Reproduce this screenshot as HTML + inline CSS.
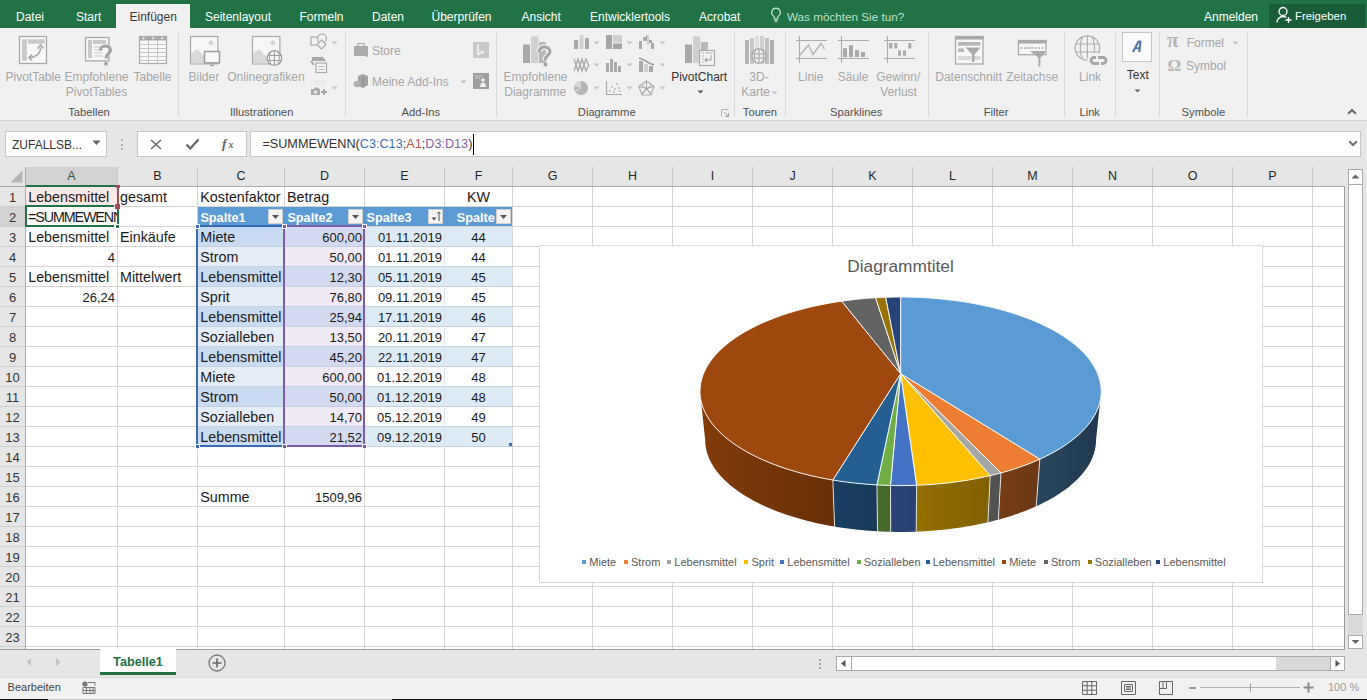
<!DOCTYPE html>
<html><head><meta charset="utf-8"><style>
html,body{margin:0;padding:0;width:1367px;height:700px;overflow:hidden;background:#fff;position:relative;font-family:"Liberation Sans",sans-serif;}
.t{position:absolute;white-space:pre;line-height:1;}
.r{position:absolute;}
</style></head><body>
<div class="r" style="left:0px;top:0px;width:1367px;height:28px;background:#217346;"></div>
<div class="r" style="left:116px;top:4px;width:74px;height:24px;background:#f1f1f1;"></div>
<div class="t" style="left:16px;top:10.64px;font-size:12px;color:#ffffff;font-weight:normal;">Datei</div>
<div class="t" style="left:76px;top:10.64px;font-size:12px;color:#ffffff;font-weight:normal;">Start</div>
<div class="t" style="left:205px;top:10.64px;font-size:12px;color:#ffffff;font-weight:normal;">Seitenlayout</div>
<div class="t" style="left:299.5px;top:10.64px;font-size:12px;color:#ffffff;font-weight:normal;">Formeln</div>
<div class="t" style="left:372px;top:10.64px;font-size:12px;color:#ffffff;font-weight:normal;">Daten</div>
<div class="t" style="left:431.5px;top:10.64px;font-size:12px;color:#ffffff;font-weight:normal;">Überprüfen</div>
<div class="t" style="left:521.5px;top:10.64px;font-size:12px;color:#ffffff;font-weight:normal;">Ansicht</div>
<div class="t" style="left:590px;top:10.64px;font-size:12px;color:#ffffff;font-weight:normal;">Entwicklertools</div>
<div class="t" style="left:699px;top:10.64px;font-size:12px;color:#ffffff;font-weight:normal;">Acrobat</div>
<div class="t" style="left:129.5px;top:10.64px;font-size:12px;color:#3a3a3a;font-weight:normal;">Einfügen</div>
<div class="t" style="left:787px;top:10.90px;font-size:11.7px;color:#bfe0ca;font-weight:normal;">Was möchten Sie tun?</div>
<svg class="r" style="left:770px;top:7px" width="12" height="16" viewBox="0 0 12 16"><path d="M6 1.2a4.3 4.3 0 0 0-2.6 7.7c.6.5.9 1.1.9 1.8v1.2h3.4v-1.2c0-.7.3-1.3.9-1.8A4.3 4.3 0 0 0 6 1.2z" fill="none" stroke="#c4e2cf" stroke-width="1.2"/><path d="M4.3 13.3h3.4M4.8 14.8h2.4" stroke="#c4e2cf" stroke-width="1.1"/></svg>
<div class="t" style="left:1204px;top:10.64px;font-size:12px;color:#ffffff;font-weight:normal;">Anmelden</div>
<div class="r" style="left:1269px;top:4px;width:96px;height:24px;background:#1a5c37;"></div>
<svg class="r" style="left:1276px;top:6px" width="17" height="18" viewBox="0 0 17 18"><circle cx="7" cy="5.5" r="4" fill="none" stroke="#fff" stroke-width="1.3"/><path d="M1 16.5c0-3.5 2.7-6 6-6 1.3 0 2.4.4 3.3 1" fill="none" stroke="#fff" stroke-width="1.3"/><path d="M12.5 11v6M9.5 14h6" stroke="#fff" stroke-width="1.3"/></svg>
<div class="t" style="left:1295px;top:11.15px;font-size:11.4px;color:#ffffff;font-weight:normal;">Freigeben</div>
<div class="r" style="left:0px;top:28px;width:1367px;height:92px;background:#f1f1f1;"></div>
<div class="r" style="left:0px;top:120px;width:1367px;height:1px;background:#d4d4d4;"></div>
<div class="r" style="left:178px;top:33px;width:1px;height:84px;background:#dadada;"></div>
<div class="r" style="left:345px;top:33px;width:1px;height:84px;background:#dadada;"></div>
<div class="r" style="left:496px;top:33px;width:1px;height:84px;background:#dadada;"></div>
<div class="r" style="left:734px;top:33px;width:1px;height:84px;background:#dadada;"></div>
<div class="r" style="left:785px;top:33px;width:1px;height:84px;background:#dadada;"></div>
<div class="r" style="left:928px;top:33px;width:1px;height:84px;background:#dadada;"></div>
<div class="r" style="left:1064px;top:33px;width:1px;height:84px;background:#dadada;"></div>
<div class="r" style="left:1115px;top:33px;width:1px;height:84px;background:#dadada;"></div>
<div class="r" style="left:1159px;top:33px;width:1px;height:84px;background:#dadada;"></div>
<div class="r" style="left:1247px;top:33px;width:1px;height:84px;background:#dadada;"></div>
<div class="t" style="left:-266.8px;width:600px;text-align:center;top:70.84px;font-size:12px;color:#a6a6a6;font-weight:normal;">PivotTable</div>
<div class="t" style="left:-203.5px;width:600px;text-align:center;top:70.84px;font-size:12px;color:#a6a6a6;font-weight:normal;">Empfohlene</div>
<div class="t" style="left:-203.5px;width:600px;text-align:center;top:86.34px;font-size:12px;color:#a6a6a6;font-weight:normal;">PivotTables</div>
<div class="t" style="left:-147.5px;width:600px;text-align:center;top:70.84px;font-size:12px;color:#a6a6a6;font-weight:normal;">Tabelle</div>
<div class="t" style="left:-211.0px;width:600px;text-align:center;top:106.82px;font-size:11.2px;color:#505050;font-weight:normal;">Tabellen</div>
<div class="t" style="left:-96.19999999999999px;width:600px;text-align:center;top:70.84px;font-size:12px;color:#a6a6a6;font-weight:normal;">Bilder</div>
<div class="t" style="left:-34.05000000000001px;width:600px;text-align:center;top:70.84px;font-size:12px;color:#a6a6a6;font-weight:normal;">Onlinegrafiken</div>
<div class="t" style="left:-38.35000000000002px;width:600px;text-align:center;top:106.82px;font-size:11.2px;color:#505050;font-weight:normal;">Illustrationen</div>
<div class="t" style="left:372px;top:44.84px;font-size:12px;color:#a6a6a6;font-weight:normal;">Store</div>
<div class="t" style="left:372px;top:75.84px;font-size:12px;color:#a6a6a6;font-weight:normal;">Meine Add-Ins</div>
<div class="t" style="left:120.89999999999998px;width:600px;text-align:center;top:106.82px;font-size:11.2px;color:#505050;font-weight:normal;">Add-Ins</div>
<div class="t" style="left:235.5px;width:600px;text-align:center;top:70.84px;font-size:12px;color:#a6a6a6;font-weight:normal;">Empfohlene</div>
<div class="t" style="left:235.25px;width:600px;text-align:center;top:86.34px;font-size:12px;color:#a6a6a6;font-weight:normal;">Diagramme</div>
<div class="t" style="left:399.20000000000005px;width:600px;text-align:center;top:70.84px;font-size:12px;color:#333333;font-weight:normal;">PivotChart</div>
<div class="t" style="left:306.75px;width:600px;text-align:center;top:106.82px;font-size:11.2px;color:#505050;font-weight:normal;">Diagramme</div>
<div class="t" style="left:458.9px;width:600px;text-align:center;top:70.84px;font-size:12px;color:#a6a6a6;font-weight:normal;">3D-</div>
<div class="t" style="left:455.5999999999999px;width:600px;text-align:center;top:86.34px;font-size:12px;color:#a6a6a6;font-weight:normal;">Karte</div>
<div class="t" style="left:459.95000000000005px;width:600px;text-align:center;top:106.82px;font-size:11.2px;color:#505050;font-weight:normal;">Touren</div>
<div class="t" style="left:510.75px;width:600px;text-align:center;top:70.84px;font-size:12px;color:#a6a6a6;font-weight:normal;">Linie</div>
<div class="t" style="left:553.0999999999999px;width:600px;text-align:center;top:70.84px;font-size:12px;color:#a6a6a6;font-weight:normal;">Säule</div>
<div class="t" style="left:598.25px;width:600px;text-align:center;top:70.84px;font-size:12px;color:#a6a6a6;font-weight:normal;">Gewinn/</div>
<div class="t" style="left:598.5999999999999px;width:600px;text-align:center;top:86.34px;font-size:12px;color:#a6a6a6;font-weight:normal;">Verlust</div>
<div class="t" style="left:556.2px;width:600px;text-align:center;top:106.82px;font-size:11.2px;color:#505050;font-weight:normal;">Sparklines</div>
<div class="t" style="left:668.65px;width:600px;text-align:center;top:70.84px;font-size:12px;color:#a6a6a6;font-weight:normal;">Datenschnitt</div>
<div class="t" style="left:732.1500000000001px;width:600px;text-align:center;top:70.84px;font-size:12px;color:#a6a6a6;font-weight:normal;">Zeitachse</div>
<div class="t" style="left:696.1px;width:600px;text-align:center;top:106.82px;font-size:11.2px;color:#505050;font-weight:normal;">Filter</div>
<div class="t" style="left:790.0999999999999px;width:600px;text-align:center;top:70.84px;font-size:12px;color:#a6a6a6;font-weight:normal;">Link</div>
<div class="t" style="left:789.6999999999998px;width:600px;text-align:center;top:106.82px;font-size:11.2px;color:#505050;font-weight:normal;">Link</div>
<div class="t" style="left:837.75px;width:600px;text-align:center;top:68.84px;font-size:12px;color:#333333;font-weight:normal;">Text</div>
<div class="t" style="left:1186.7px;top:36.84px;font-size:12px;color:#a6a6a6;font-weight:normal;">Formel</div>
<div class="t" style="left:1186px;top:60.34px;font-size:12px;color:#a6a6a6;font-weight:normal;">Symbol</div>
<div class="t" style="left:903.3499999999999px;width:600px;text-align:center;top:106.82px;font-size:11.2px;color:#505050;font-weight:normal;">Symbole</div>
<div class="r" style="left:0px;top:121px;width:1367px;height:46px;background:#e6e6e6;"></div>
<div class="r" style="left:5px;top:131px;width:102px;height:26px;background:#ffffff;box-sizing:border-box;border:1px solid #c6c6c6;"></div>
<div class="t" style="left:12px;top:138.84px;font-size:12px;color:#333333;font-weight:normal;">ZUFALLSB...</div>
<div class="r" style="left:137px;top:131px;width:110px;height:26px;background:#ffffff;box-sizing:border-box;border:1px solid #c6c6c6;"></div>
<div class="r" style="left:250px;top:131px;width:1111px;height:26px;background:#ffffff;box-sizing:border-box;border:1px solid #c6c6c6;"></div>
<div class="t" style="left:262.4px;top:138.28px;font-size:12.66px;color:#333333;font-weight:normal;">=SUMMEWENN(<span style="color:#3b70b8">C3:C13</span>;<span style="color:#c0504d">A1</span>;<span style="color:#8064a2">D3:D13</span>)</div>
<div class="r" style="left:473px;top:134px;width:1px;height:21px;background:#000000;"></div>
<div class="r" style="left:0px;top:167px;width:1345px;height:20px;background:#e6e6e6;"></div>
<div class="r" style="left:26px;top:167px;width:91px;height:19px;background:#d2d2d2;"></div>
<div class="r" style="left:117px;top:167px;width:1px;height:19px;background:#c6c6c6;"></div>
<div class="r" style="left:197px;top:167px;width:1px;height:19px;background:#c6c6c6;"></div>
<div class="r" style="left:284px;top:167px;width:1px;height:19px;background:#c6c6c6;"></div>
<div class="r" style="left:364px;top:167px;width:1px;height:19px;background:#c6c6c6;"></div>
<div class="r" style="left:444px;top:167px;width:1px;height:19px;background:#c6c6c6;"></div>
<div class="r" style="left:512px;top:167px;width:1px;height:19px;background:#c6c6c6;"></div>
<div class="r" style="left:592px;top:167px;width:1px;height:19px;background:#c6c6c6;"></div>
<div class="r" style="left:672px;top:167px;width:1px;height:19px;background:#c6c6c6;"></div>
<div class="r" style="left:752px;top:167px;width:1px;height:19px;background:#c6c6c6;"></div>
<div class="r" style="left:832px;top:167px;width:1px;height:19px;background:#c6c6c6;"></div>
<div class="r" style="left:912px;top:167px;width:1px;height:19px;background:#c6c6c6;"></div>
<div class="r" style="left:992px;top:167px;width:1px;height:19px;background:#c6c6c6;"></div>
<div class="r" style="left:1072px;top:167px;width:1px;height:19px;background:#c6c6c6;"></div>
<div class="r" style="left:1152px;top:167px;width:1px;height:19px;background:#c6c6c6;"></div>
<div class="r" style="left:1232px;top:167px;width:1px;height:19px;background:#c6c6c6;"></div>
<div class="r" style="left:1312px;top:167px;width:1px;height:19px;background:#c6c6c6;"></div>
<div class="t" style="left:-228.5px;width:600px;text-align:center;top:170.42px;font-size:12.5px;color:#2e5540;font-weight:normal;">A</div>
<div class="t" style="left:-142.5px;width:600px;text-align:center;top:170.42px;font-size:12.5px;color:#262626;font-weight:normal;">B</div>
<div class="t" style="left:-59.0px;width:600px;text-align:center;top:170.42px;font-size:12.5px;color:#262626;font-weight:normal;">C</div>
<div class="t" style="left:24.5px;width:600px;text-align:center;top:170.42px;font-size:12.5px;color:#262626;font-weight:normal;">D</div>
<div class="t" style="left:104.5px;width:600px;text-align:center;top:170.42px;font-size:12.5px;color:#262626;font-weight:normal;">E</div>
<div class="t" style="left:178.5px;width:600px;text-align:center;top:170.42px;font-size:12.5px;color:#262626;font-weight:normal;">F</div>
<div class="t" style="left:252.5px;width:600px;text-align:center;top:170.42px;font-size:12.5px;color:#262626;font-weight:normal;">G</div>
<div class="t" style="left:332.5px;width:600px;text-align:center;top:170.42px;font-size:12.5px;color:#262626;font-weight:normal;">H</div>
<div class="t" style="left:412.5px;width:600px;text-align:center;top:170.42px;font-size:12.5px;color:#262626;font-weight:normal;">I</div>
<div class="t" style="left:492.5px;width:600px;text-align:center;top:170.42px;font-size:12.5px;color:#262626;font-weight:normal;">J</div>
<div class="t" style="left:572.5px;width:600px;text-align:center;top:170.42px;font-size:12.5px;color:#262626;font-weight:normal;">K</div>
<div class="t" style="left:652.5px;width:600px;text-align:center;top:170.42px;font-size:12.5px;color:#262626;font-weight:normal;">L</div>
<div class="t" style="left:732.5px;width:600px;text-align:center;top:170.42px;font-size:12.5px;color:#262626;font-weight:normal;">M</div>
<div class="t" style="left:812.5px;width:600px;text-align:center;top:170.42px;font-size:12.5px;color:#262626;font-weight:normal;">N</div>
<div class="t" style="left:892.5px;width:600px;text-align:center;top:170.42px;font-size:12.5px;color:#262626;font-weight:normal;">O</div>
<div class="t" style="left:972.5px;width:600px;text-align:center;top:170.42px;font-size:12.5px;color:#262626;font-weight:normal;">P</div>
<div class="r" style="left:0px;top:186px;width:1345px;height:1px;background:#ababab;"></div>
<div class="r" style="left:26px;top:185px;width:91px;height:2px;background:#217346;"></div>
<div class="r" style="left:26px;top:187px;width:1318px;height:462px;background:#ffffff;"></div>
<div class="r" style="left:0px;top:187px;width:25px;height:462px;background:#e6e6e6;"></div>
<div class="r" style="left:0px;top:207px;width:25px;height:19px;background:#d2d2d2;"></div>
<div class="r" style="left:25px;top:167px;width:1px;height:482px;background:#ababab;"></div>
<div class="r" style="left:0px;top:206px;width:25px;height:1px;background:#d0d0d0;"></div>
<div class="r" style="left:26px;top:206px;width:1318px;height:1px;background:#d4d4d4;"></div>
<div class="r" style="left:0px;top:226px;width:25px;height:1px;background:#d0d0d0;"></div>
<div class="r" style="left:26px;top:226px;width:1318px;height:1px;background:#d4d4d4;"></div>
<div class="r" style="left:0px;top:246px;width:25px;height:1px;background:#d0d0d0;"></div>
<div class="r" style="left:26px;top:246px;width:1318px;height:1px;background:#d4d4d4;"></div>
<div class="r" style="left:0px;top:266px;width:25px;height:1px;background:#d0d0d0;"></div>
<div class="r" style="left:26px;top:266px;width:1318px;height:1px;background:#d4d4d4;"></div>
<div class="r" style="left:0px;top:286px;width:25px;height:1px;background:#d0d0d0;"></div>
<div class="r" style="left:26px;top:286px;width:1318px;height:1px;background:#d4d4d4;"></div>
<div class="r" style="left:0px;top:306px;width:25px;height:1px;background:#d0d0d0;"></div>
<div class="r" style="left:26px;top:306px;width:1318px;height:1px;background:#d4d4d4;"></div>
<div class="r" style="left:0px;top:326px;width:25px;height:1px;background:#d0d0d0;"></div>
<div class="r" style="left:26px;top:326px;width:1318px;height:1px;background:#d4d4d4;"></div>
<div class="r" style="left:0px;top:346px;width:25px;height:1px;background:#d0d0d0;"></div>
<div class="r" style="left:26px;top:346px;width:1318px;height:1px;background:#d4d4d4;"></div>
<div class="r" style="left:0px;top:366px;width:25px;height:1px;background:#d0d0d0;"></div>
<div class="r" style="left:26px;top:366px;width:1318px;height:1px;background:#d4d4d4;"></div>
<div class="r" style="left:0px;top:386px;width:25px;height:1px;background:#d0d0d0;"></div>
<div class="r" style="left:26px;top:386px;width:1318px;height:1px;background:#d4d4d4;"></div>
<div class="r" style="left:0px;top:406px;width:25px;height:1px;background:#d0d0d0;"></div>
<div class="r" style="left:26px;top:406px;width:1318px;height:1px;background:#d4d4d4;"></div>
<div class="r" style="left:0px;top:426px;width:25px;height:1px;background:#d0d0d0;"></div>
<div class="r" style="left:26px;top:426px;width:1318px;height:1px;background:#d4d4d4;"></div>
<div class="r" style="left:0px;top:446px;width:25px;height:1px;background:#d0d0d0;"></div>
<div class="r" style="left:26px;top:446px;width:1318px;height:1px;background:#d4d4d4;"></div>
<div class="r" style="left:0px;top:466px;width:25px;height:1px;background:#d0d0d0;"></div>
<div class="r" style="left:26px;top:466px;width:1318px;height:1px;background:#d4d4d4;"></div>
<div class="r" style="left:0px;top:486px;width:25px;height:1px;background:#d0d0d0;"></div>
<div class="r" style="left:26px;top:486px;width:1318px;height:1px;background:#d4d4d4;"></div>
<div class="r" style="left:0px;top:506px;width:25px;height:1px;background:#d0d0d0;"></div>
<div class="r" style="left:26px;top:506px;width:1318px;height:1px;background:#d4d4d4;"></div>
<div class="r" style="left:0px;top:526px;width:25px;height:1px;background:#d0d0d0;"></div>
<div class="r" style="left:26px;top:526px;width:1318px;height:1px;background:#d4d4d4;"></div>
<div class="r" style="left:0px;top:546px;width:25px;height:1px;background:#d0d0d0;"></div>
<div class="r" style="left:26px;top:546px;width:1318px;height:1px;background:#d4d4d4;"></div>
<div class="r" style="left:0px;top:566px;width:25px;height:1px;background:#d0d0d0;"></div>
<div class="r" style="left:26px;top:566px;width:1318px;height:1px;background:#d4d4d4;"></div>
<div class="r" style="left:0px;top:586px;width:25px;height:1px;background:#d0d0d0;"></div>
<div class="r" style="left:26px;top:586px;width:1318px;height:1px;background:#d4d4d4;"></div>
<div class="r" style="left:0px;top:606px;width:25px;height:1px;background:#d0d0d0;"></div>
<div class="r" style="left:26px;top:606px;width:1318px;height:1px;background:#d4d4d4;"></div>
<div class="r" style="left:0px;top:626px;width:25px;height:1px;background:#d0d0d0;"></div>
<div class="r" style="left:26px;top:626px;width:1318px;height:1px;background:#d4d4d4;"></div>
<div class="r" style="left:0px;top:646px;width:25px;height:1px;background:#d0d0d0;"></div>
<div class="r" style="left:26px;top:646px;width:1318px;height:1px;background:#d4d4d4;"></div>
<div class="r" style="left:117px;top:187px;width:1px;height:462px;background:#d4d4d4;"></div>
<div class="r" style="left:197px;top:187px;width:1px;height:462px;background:#d4d4d4;"></div>
<div class="r" style="left:284px;top:187px;width:1px;height:462px;background:#d4d4d4;"></div>
<div class="r" style="left:364px;top:187px;width:1px;height:462px;background:#d4d4d4;"></div>
<div class="r" style="left:444px;top:187px;width:1px;height:462px;background:#d4d4d4;"></div>
<div class="r" style="left:512px;top:187px;width:1px;height:462px;background:#d4d4d4;"></div>
<div class="r" style="left:592px;top:187px;width:1px;height:462px;background:#d4d4d4;"></div>
<div class="r" style="left:672px;top:187px;width:1px;height:462px;background:#d4d4d4;"></div>
<div class="r" style="left:752px;top:187px;width:1px;height:462px;background:#d4d4d4;"></div>
<div class="r" style="left:832px;top:187px;width:1px;height:462px;background:#d4d4d4;"></div>
<div class="r" style="left:912px;top:187px;width:1px;height:462px;background:#d4d4d4;"></div>
<div class="r" style="left:992px;top:187px;width:1px;height:462px;background:#d4d4d4;"></div>
<div class="r" style="left:1072px;top:187px;width:1px;height:462px;background:#d4d4d4;"></div>
<div class="r" style="left:1152px;top:187px;width:1px;height:462px;background:#d4d4d4;"></div>
<div class="r" style="left:1232px;top:187px;width:1px;height:462px;background:#d4d4d4;"></div>
<div class="r" style="left:1312px;top:187px;width:1px;height:462px;background:#d4d4d4;"></div>
<div class="r" style="left:1344px;top:187px;width:1px;height:462px;background:#9a9a9a;"></div>
<div class="t" style="left:-287.5px;width:600px;text-align:center;top:190.80px;font-size:13px;color:#333333;font-weight:normal;">1</div>
<div class="t" style="left:-287.5px;width:600px;text-align:center;top:210.80px;font-size:13px;color:#333333;font-weight:normal;">2</div>
<div class="t" style="left:-287.5px;width:600px;text-align:center;top:230.80px;font-size:13px;color:#333333;font-weight:normal;">3</div>
<div class="t" style="left:-287.5px;width:600px;text-align:center;top:250.80px;font-size:13px;color:#333333;font-weight:normal;">4</div>
<div class="t" style="left:-287.5px;width:600px;text-align:center;top:270.80px;font-size:13px;color:#333333;font-weight:normal;">5</div>
<div class="t" style="left:-287.5px;width:600px;text-align:center;top:290.80px;font-size:13px;color:#333333;font-weight:normal;">6</div>
<div class="t" style="left:-287.5px;width:600px;text-align:center;top:310.80px;font-size:13px;color:#333333;font-weight:normal;">7</div>
<div class="t" style="left:-287.5px;width:600px;text-align:center;top:330.80px;font-size:13px;color:#333333;font-weight:normal;">8</div>
<div class="t" style="left:-287.5px;width:600px;text-align:center;top:350.80px;font-size:13px;color:#333333;font-weight:normal;">9</div>
<div class="t" style="left:-287.5px;width:600px;text-align:center;top:370.80px;font-size:13px;color:#333333;font-weight:normal;">10</div>
<div class="t" style="left:-287.5px;width:600px;text-align:center;top:390.80px;font-size:13px;color:#333333;font-weight:normal;">11</div>
<div class="t" style="left:-287.5px;width:600px;text-align:center;top:410.80px;font-size:13px;color:#333333;font-weight:normal;">12</div>
<div class="t" style="left:-287.5px;width:600px;text-align:center;top:430.80px;font-size:13px;color:#333333;font-weight:normal;">13</div>
<div class="t" style="left:-287.5px;width:600px;text-align:center;top:450.80px;font-size:13px;color:#333333;font-weight:normal;">14</div>
<div class="t" style="left:-287.5px;width:600px;text-align:center;top:470.80px;font-size:13px;color:#333333;font-weight:normal;">15</div>
<div class="t" style="left:-287.5px;width:600px;text-align:center;top:490.80px;font-size:13px;color:#333333;font-weight:normal;">16</div>
<div class="t" style="left:-287.5px;width:600px;text-align:center;top:510.80px;font-size:13px;color:#333333;font-weight:normal;">17</div>
<div class="t" style="left:-287.5px;width:600px;text-align:center;top:530.80px;font-size:13px;color:#333333;font-weight:normal;">18</div>
<div class="t" style="left:-287.5px;width:600px;text-align:center;top:550.80px;font-size:13px;color:#333333;font-weight:normal;">19</div>
<div class="t" style="left:-287.5px;width:600px;text-align:center;top:570.80px;font-size:13px;color:#333333;font-weight:normal;">20</div>
<div class="t" style="left:-287.5px;width:600px;text-align:center;top:590.80px;font-size:13px;color:#333333;font-weight:normal;">21</div>
<div class="t" style="left:-287.5px;width:600px;text-align:center;top:610.80px;font-size:13px;color:#333333;font-weight:normal;">22</div>
<div class="t" style="left:-287.5px;width:600px;text-align:center;top:630.80px;font-size:13px;color:#333333;font-weight:normal;">23</div>
<div class="r" style="left:26px;top:187px;width:91px;height:19px;background:#fbe9e9;"></div>
<div class="t" style="left:28.2px;top:190.30px;font-size:14.3px;color:#1a1a1a;font-weight:normal;">Lebensmittel</div>
<div class="t" style="left:120px;top:190.30px;font-size:14.3px;color:#1a1a1a;font-weight:normal;">gesamt</div>
<div class="t" style="left:200.3px;top:190.30px;font-size:14.3px;color:#1a1a1a;font-weight:normal;">Kostenfaktor</div>
<div class="t" style="left:287px;top:190.30px;font-size:14.3px;color:#1a1a1a;font-weight:normal;">Betrag</div>
<div class="t" style="left:178.5px;width:600px;text-align:center;top:190.30px;font-size:14.3px;color:#1a1a1a;font-weight:normal;">KW</div>
<div class="r" style="left:26px;top:207px;width:91px;height:19px;overflow:hidden">
<div class="t" style="left:2px;top:3.30px;font-size:14.3px;color:#1a1a1a;font-weight:normal;letter-spacing:-1.1px;">=SUMMEWENN(C3</div>
</div>
<div class="t" style="left:28.2px;top:230.30px;font-size:14.3px;color:#1a1a1a;font-weight:normal;">Lebensmittel</div>
<div class="t" style="left:120px;top:230.30px;font-size:14.3px;color:#1a1a1a;font-weight:normal;">Einkäufe</div>
<div class="t" style="right:1252px;top:251.40px;font-size:13px;color:#1a1a1a;font-weight:normal;">4</div>
<div class="t" style="left:28.2px;top:270.30px;font-size:14.3px;color:#1a1a1a;font-weight:normal;">Lebensmittel</div>
<div class="t" style="left:120px;top:270.30px;font-size:14.3px;color:#1a1a1a;font-weight:normal;">Mittelwert</div>
<div class="t" style="right:1252px;top:291.40px;font-size:13px;color:#1a1a1a;font-weight:normal;">26,24</div>
<div class="t" style="left:200.3px;top:490.30px;font-size:14.3px;color:#1a1a1a;font-weight:normal;">Summe</div>
<div class="t" style="right:1005px;top:491.40px;font-size:13px;color:#1a1a1a;font-weight:normal;">1509,96</div>
<div class="r" style="left:198px;top:207px;width:314px;height:19px;background:#5b9bd5;"></div>
<div class="t" style="left:200.4px;top:211.65px;font-size:12.7px;color:#ffffff;font-weight:bold;">Spalte1</div>
<div class="t" style="left:287.4px;top:211.65px;font-size:12.7px;color:#ffffff;font-weight:bold;">Spalte2</div>
<div class="t" style="left:366.5px;top:211.65px;font-size:12.7px;color:#ffffff;font-weight:bold;">Spalte3</div>
<div class="r" style="left:445px;top:207px;width:50px;height:19px;overflow:hidden">
<div class="t" style="left:11.8px;top:4.65px;font-size:12.7px;color:#ffffff;font-weight:bold;">Spalte4</div>
</div>
<div class="r" style="left:268px;top:209px;width:15px;height:15px;background:#f4f4f4;box-sizing:border-box;border:1px solid #d0d0d0;"></div>
<svg class="r" style="left:268px;top:209px" width="15" height="15"><path d="M4 6h7l-3.5 4z" fill="#555"/></svg>
<div class="r" style="left:348px;top:209px;width:15px;height:15px;background:#f4f4f4;box-sizing:border-box;border:1px solid #d0d0d0;"></div>
<svg class="r" style="left:348px;top:209px" width="15" height="15"><path d="M4 6h7l-3.5 4z" fill="#555"/></svg>
<div class="r" style="left:428px;top:209px;width:15px;height:15px;background:#f4f4f4;box-sizing:border-box;border:1px solid #d0d0d0;"></div>
<svg class="r" style="left:428px;top:209px" width="15" height="15"><path d="M3.5 8.5h5l-2.5 3z" fill="#555"/><path d="M11 3v9M9.5 4.5L11 3l1.5 1.5" fill="none" stroke="#555" stroke-width="1"/></svg>
<div class="r" style="left:496px;top:209px;width:15px;height:15px;background:#f4f4f4;box-sizing:border-box;border:1px solid #d0d0d0;"></div>
<svg class="r" style="left:496px;top:209px" width="15" height="15"><path d="M4 6h7l-3.5 4z" fill="#555"/></svg>
<div class="r" style="left:198px;top:227px;width:86px;height:19px;background:#c9dbf2;"></div>
<div class="r" style="left:285px;top:227px;width:79px;height:19px;background:#d3d9f0;"></div>
<div class="r" style="left:365px;top:227px;width:79px;height:19px;background:#ddebf7;"></div>
<div class="r" style="left:445px;top:227px;width:67px;height:19px;background:#ddebf7;"></div>
<div class="r" style="left:198px;top:246px;width:314px;height:1px;background:#c5cfe0;"></div>
<div class="t" style="left:200.3px;top:230.30px;font-size:14.3px;color:#1a1a1a;font-weight:normal;">Miete</div>
<div class="t" style="right:1005px;top:231.40px;font-size:13px;color:#1a1a1a;font-weight:normal;">600,00</div>
<div class="t" style="right:925px;top:231.40px;font-size:13px;color:#1a1a1a;font-weight:normal;">01.11.2019</div>
<div class="t" style="left:178.5px;width:600px;text-align:center;top:231.40px;font-size:13px;color:#1a1a1a;font-weight:normal;">44</div>
<div class="r" style="left:198px;top:247px;width:86px;height:19px;background:#e5edf9;"></div>
<div class="r" style="left:285px;top:247px;width:79px;height:19px;background:#efeaf6;"></div>
<div class="r" style="left:365px;top:247px;width:79px;height:19px;background:#ffffff;"></div>
<div class="r" style="left:445px;top:247px;width:67px;height:19px;background:#ffffff;"></div>
<div class="r" style="left:198px;top:266px;width:314px;height:1px;background:#c5cfe0;"></div>
<div class="t" style="left:200.3px;top:250.30px;font-size:14.3px;color:#1a1a1a;font-weight:normal;">Strom</div>
<div class="t" style="right:1005px;top:251.40px;font-size:13px;color:#1a1a1a;font-weight:normal;">50,00</div>
<div class="t" style="right:925px;top:251.40px;font-size:13px;color:#1a1a1a;font-weight:normal;">01.11.2019</div>
<div class="t" style="left:178.5px;width:600px;text-align:center;top:251.40px;font-size:13px;color:#1a1a1a;font-weight:normal;">44</div>
<div class="r" style="left:198px;top:267px;width:86px;height:19px;background:#c9dbf2;"></div>
<div class="r" style="left:285px;top:267px;width:79px;height:19px;background:#d3d9f0;"></div>
<div class="r" style="left:365px;top:267px;width:79px;height:19px;background:#ddebf7;"></div>
<div class="r" style="left:445px;top:267px;width:67px;height:19px;background:#ddebf7;"></div>
<div class="r" style="left:198px;top:286px;width:314px;height:1px;background:#c5cfe0;"></div>
<div class="t" style="left:200.3px;top:270.30px;font-size:14.3px;color:#1a1a1a;font-weight:normal;">Lebensmittel</div>
<div class="t" style="right:1005px;top:271.40px;font-size:13px;color:#1a1a1a;font-weight:normal;">12,30</div>
<div class="t" style="right:925px;top:271.40px;font-size:13px;color:#1a1a1a;font-weight:normal;">05.11.2019</div>
<div class="t" style="left:178.5px;width:600px;text-align:center;top:271.40px;font-size:13px;color:#1a1a1a;font-weight:normal;">45</div>
<div class="r" style="left:198px;top:287px;width:86px;height:19px;background:#e5edf9;"></div>
<div class="r" style="left:285px;top:287px;width:79px;height:19px;background:#efeaf6;"></div>
<div class="r" style="left:365px;top:287px;width:79px;height:19px;background:#ffffff;"></div>
<div class="r" style="left:445px;top:287px;width:67px;height:19px;background:#ffffff;"></div>
<div class="r" style="left:198px;top:306px;width:314px;height:1px;background:#c5cfe0;"></div>
<div class="t" style="left:200.3px;top:290.30px;font-size:14.3px;color:#1a1a1a;font-weight:normal;">Sprit</div>
<div class="t" style="right:1005px;top:291.40px;font-size:13px;color:#1a1a1a;font-weight:normal;">76,80</div>
<div class="t" style="right:925px;top:291.40px;font-size:13px;color:#1a1a1a;font-weight:normal;">09.11.2019</div>
<div class="t" style="left:178.5px;width:600px;text-align:center;top:291.40px;font-size:13px;color:#1a1a1a;font-weight:normal;">45</div>
<div class="r" style="left:198px;top:307px;width:86px;height:19px;background:#c9dbf2;"></div>
<div class="r" style="left:285px;top:307px;width:79px;height:19px;background:#d3d9f0;"></div>
<div class="r" style="left:365px;top:307px;width:79px;height:19px;background:#ddebf7;"></div>
<div class="r" style="left:445px;top:307px;width:67px;height:19px;background:#ddebf7;"></div>
<div class="r" style="left:198px;top:326px;width:314px;height:1px;background:#c5cfe0;"></div>
<div class="t" style="left:200.3px;top:310.30px;font-size:14.3px;color:#1a1a1a;font-weight:normal;">Lebensmittel</div>
<div class="t" style="right:1005px;top:311.40px;font-size:13px;color:#1a1a1a;font-weight:normal;">25,94</div>
<div class="t" style="right:925px;top:311.40px;font-size:13px;color:#1a1a1a;font-weight:normal;">17.11.2019</div>
<div class="t" style="left:178.5px;width:600px;text-align:center;top:311.40px;font-size:13px;color:#1a1a1a;font-weight:normal;">46</div>
<div class="r" style="left:198px;top:327px;width:86px;height:19px;background:#e5edf9;"></div>
<div class="r" style="left:285px;top:327px;width:79px;height:19px;background:#efeaf6;"></div>
<div class="r" style="left:365px;top:327px;width:79px;height:19px;background:#ffffff;"></div>
<div class="r" style="left:445px;top:327px;width:67px;height:19px;background:#ffffff;"></div>
<div class="r" style="left:198px;top:346px;width:314px;height:1px;background:#c5cfe0;"></div>
<div class="t" style="left:200.3px;top:330.30px;font-size:14.3px;color:#1a1a1a;font-weight:normal;">Sozialleben</div>
<div class="t" style="right:1005px;top:331.40px;font-size:13px;color:#1a1a1a;font-weight:normal;">13,50</div>
<div class="t" style="right:925px;top:331.40px;font-size:13px;color:#1a1a1a;font-weight:normal;">20.11.2019</div>
<div class="t" style="left:178.5px;width:600px;text-align:center;top:331.40px;font-size:13px;color:#1a1a1a;font-weight:normal;">47</div>
<div class="r" style="left:198px;top:347px;width:86px;height:19px;background:#c9dbf2;"></div>
<div class="r" style="left:285px;top:347px;width:79px;height:19px;background:#d3d9f0;"></div>
<div class="r" style="left:365px;top:347px;width:79px;height:19px;background:#ddebf7;"></div>
<div class="r" style="left:445px;top:347px;width:67px;height:19px;background:#ddebf7;"></div>
<div class="r" style="left:198px;top:366px;width:314px;height:1px;background:#c5cfe0;"></div>
<div class="t" style="left:200.3px;top:350.30px;font-size:14.3px;color:#1a1a1a;font-weight:normal;">Lebensmittel</div>
<div class="t" style="right:1005px;top:351.40px;font-size:13px;color:#1a1a1a;font-weight:normal;">45,20</div>
<div class="t" style="right:925px;top:351.40px;font-size:13px;color:#1a1a1a;font-weight:normal;">22.11.2019</div>
<div class="t" style="left:178.5px;width:600px;text-align:center;top:351.40px;font-size:13px;color:#1a1a1a;font-weight:normal;">47</div>
<div class="r" style="left:198px;top:367px;width:86px;height:19px;background:#e5edf9;"></div>
<div class="r" style="left:285px;top:367px;width:79px;height:19px;background:#efeaf6;"></div>
<div class="r" style="left:365px;top:367px;width:79px;height:19px;background:#ffffff;"></div>
<div class="r" style="left:445px;top:367px;width:67px;height:19px;background:#ffffff;"></div>
<div class="r" style="left:198px;top:386px;width:314px;height:1px;background:#c5cfe0;"></div>
<div class="t" style="left:200.3px;top:370.30px;font-size:14.3px;color:#1a1a1a;font-weight:normal;">Miete</div>
<div class="t" style="right:1005px;top:371.40px;font-size:13px;color:#1a1a1a;font-weight:normal;">600,00</div>
<div class="t" style="right:925px;top:371.40px;font-size:13px;color:#1a1a1a;font-weight:normal;">01.12.2019</div>
<div class="t" style="left:178.5px;width:600px;text-align:center;top:371.40px;font-size:13px;color:#1a1a1a;font-weight:normal;">48</div>
<div class="r" style="left:198px;top:387px;width:86px;height:19px;background:#c9dbf2;"></div>
<div class="r" style="left:285px;top:387px;width:79px;height:19px;background:#d3d9f0;"></div>
<div class="r" style="left:365px;top:387px;width:79px;height:19px;background:#ddebf7;"></div>
<div class="r" style="left:445px;top:387px;width:67px;height:19px;background:#ddebf7;"></div>
<div class="r" style="left:198px;top:406px;width:314px;height:1px;background:#c5cfe0;"></div>
<div class="t" style="left:200.3px;top:390.30px;font-size:14.3px;color:#1a1a1a;font-weight:normal;">Strom</div>
<div class="t" style="right:1005px;top:391.40px;font-size:13px;color:#1a1a1a;font-weight:normal;">50,00</div>
<div class="t" style="right:925px;top:391.40px;font-size:13px;color:#1a1a1a;font-weight:normal;">01.12.2019</div>
<div class="t" style="left:178.5px;width:600px;text-align:center;top:391.40px;font-size:13px;color:#1a1a1a;font-weight:normal;">48</div>
<div class="r" style="left:198px;top:407px;width:86px;height:19px;background:#e5edf9;"></div>
<div class="r" style="left:285px;top:407px;width:79px;height:19px;background:#efeaf6;"></div>
<div class="r" style="left:365px;top:407px;width:79px;height:19px;background:#ffffff;"></div>
<div class="r" style="left:445px;top:407px;width:67px;height:19px;background:#ffffff;"></div>
<div class="r" style="left:198px;top:426px;width:314px;height:1px;background:#c5cfe0;"></div>
<div class="t" style="left:200.3px;top:410.30px;font-size:14.3px;color:#1a1a1a;font-weight:normal;">Sozialleben</div>
<div class="t" style="right:1005px;top:411.40px;font-size:13px;color:#1a1a1a;font-weight:normal;">14,70</div>
<div class="t" style="right:925px;top:411.40px;font-size:13px;color:#1a1a1a;font-weight:normal;">05.12.2019</div>
<div class="t" style="left:178.5px;width:600px;text-align:center;top:411.40px;font-size:13px;color:#1a1a1a;font-weight:normal;">49</div>
<div class="r" style="left:198px;top:427px;width:86px;height:19px;background:#c9dbf2;"></div>
<div class="r" style="left:285px;top:427px;width:79px;height:19px;background:#d3d9f0;"></div>
<div class="r" style="left:365px;top:427px;width:79px;height:19px;background:#ddebf7;"></div>
<div class="r" style="left:445px;top:427px;width:67px;height:19px;background:#ddebf7;"></div>
<div class="r" style="left:198px;top:446px;width:314px;height:1px;background:#c5cfe0;"></div>
<div class="t" style="left:200.3px;top:430.30px;font-size:14.3px;color:#1a1a1a;font-weight:normal;">Lebensmittel</div>
<div class="t" style="right:1005px;top:431.40px;font-size:13px;color:#1a1a1a;font-weight:normal;">21,52</div>
<div class="t" style="right:925px;top:431.40px;font-size:13px;color:#1a1a1a;font-weight:normal;">09.12.2019</div>
<div class="t" style="left:178.5px;width:600px;text-align:center;top:431.40px;font-size:13px;color:#1a1a1a;font-weight:normal;">50</div>
<div class="r" style="left:444px;top:227px;width:1px;height:220px;background:#d8e4f0;"></div>
<div class="r" style="left:196px;top:225px;width:2px;height:222px;background:#3a6cba;"></div>
<div class="r" style="left:196px;top:445px;width:88px;height:2px;background:#3a6cba;"></div>
<div class="r" style="left:283px;top:225px;width:2px;height:222px;background:#7a5ca8;"></div>
<div class="r" style="left:363px;top:225px;width:2px;height:222px;background:#7a5ca8;"></div>
<div class="r" style="left:283px;top:225px;width:82px;height:2px;background:#7a5ca8;"></div>
<div class="r" style="left:283px;top:445px;width:82px;height:2px;background:#7a5ca8;"></div>
<div class="r" style="left:196px;top:225px;width:88px;height:2px;background:#3a6cba;"></div>
<div class="r" style="left:195px;top:224px;width:5px;height:5px;background:#3a6cba;box-sizing:border-box;border:1px solid #fff;"></div>
<div class="r" style="left:195px;top:444px;width:5px;height:5px;background:#3a6cba;box-sizing:border-box;border:1px solid #fff;"></div>
<div class="r" style="left:282px;top:224px;width:5px;height:5px;background:#7a5ca8;box-sizing:border-box;border:1px solid #fff;"></div>
<div class="r" style="left:362px;top:224px;width:5px;height:5px;background:#7a5ca8;box-sizing:border-box;border:1px solid #fff;"></div>
<div class="r" style="left:282px;top:444px;width:5px;height:5px;background:#7a5ca8;box-sizing:border-box;border:1px solid #fff;"></div>
<div class="r" style="left:362px;top:444px;width:5px;height:5px;background:#7a5ca8;box-sizing:border-box;border:1px solid #fff;"></div>
<div class="r" style="left:509px;top:443px;width:3px;height:3px;background:#3a6cba;"></div>
<div class="r" style="left:117px;top:187px;width:2px;height:18px;background:#a84a5a;"></div>
<div class="r" style="left:116px;top:185px;width:4px;height:3px;background:#a84a5a;"></div>
<div class="r" style="left:115px;top:204px;width:5px;height:5px;background:#a84a5a;"></div>
<div class="r" style="left:26px;top:185px;width:90px;height:2px;background:#217346;"></div>
<div class="r" style="left:25px;top:205px;width:89px;height:2px;background:#217346;"></div>
<div class="r" style="left:25px;top:225px;width:89px;height:2px;background:#217346;"></div>
<div class="r" style="left:25px;top:205px;width:2px;height:22px;background:#217346;"></div>
<div class="r" style="left:117px;top:209px;width:2px;height:15px;background:#217346;"></div>
<div class="r" style="left:115px;top:224px;width:5px;height:5px;background:#217346;box-sizing:border-box;border:1px solid #fff;"></div>
<div class="r" style="left:0px;top:649px;width:1367px;height:28px;background:#e6e6e6;"></div>
<div class="r" style="left:0px;top:649px;width:1345px;height:1px;background:#9a9a9a;"></div>
<div class="r" style="left:100px;top:649px;width:76px;height:26px;background:#ffffff;"></div>
<div class="r" style="left:100px;top:672px;width:76px;height:3px;background:#217346;"></div>
<div class="t" style="left:-162px;width:600px;text-align:center;top:655.75px;font-size:12.7px;color:#217346;font-weight:bold;">Tabelle1</div>
<svg class="r" style="left:22px;top:655px" width="44" height="14"><path d="M9 3v8L4.5 7z" fill="#c2c2c2"/><path d="M34 3v8l4.5-4z" fill="#c2c2c2"/></svg>
<svg class="r" style="left:207px;top:653px" width="20" height="20"><circle cx="10" cy="10" r="8" fill="none" stroke="#777" stroke-width="1.3"/><path d="M10 5.5v9M5.5 10h9" stroke="#666" stroke-width="1.6"/></svg>
<div class="r" style="left:819px;top:659px;width:2px;height:2px;background:#aaaaaa;"></div>
<div class="r" style="left:819px;top:663px;width:2px;height:2px;background:#aaaaaa;"></div>
<div class="r" style="left:819px;top:667px;width:2px;height:2px;background:#aaaaaa;"></div>
<div class="r" style="left:836px;top:656px;width:509px;height:15px;background:#ffffff;box-sizing:border-box;border:1px solid #ababab;"></div>
<div class="r" style="left:1276px;top:657px;width:54px;height:13px;background:#d9d9d9;"></div>
<div class="r" style="left:851px;top:657px;width:1px;height:13px;background:#ababab;"></div>
<div class="r" style="left:1330px;top:657px;width:1px;height:13px;background:#ababab;"></div>
<svg class="r" style="left:836px;top:656px" width="15" height="15"><path d="M9.5 4v7L5 7.5z" fill="#555"/></svg>
<svg class="r" style="left:1330px;top:656px" width="15" height="15"><path d="M5.5 4v7L10 7.5z" fill="#555"/></svg>
<div class="r" style="left:1345px;top:167px;width:22px;height:482px;background:#e6e6e6;"></div>
<div class="r" style="left:1348px;top:169px;width:15px;height:480px;background:#d9d9d9;"></div>
<div class="r" style="left:1348px;top:169px;width:15px;height:446px;background:#ffffff;box-sizing:border-box;border:1px solid #ababab;"></div>
<div class="r" style="left:1348px;top:184px;width:15px;height:1px;background:#ababab;"></div>
<div class="r" style="left:1348px;top:635px;width:15px;height:14px;background:#ffffff;box-sizing:border-box;border:1px solid #ababab;"></div>
<svg class="r" style="left:1348px;top:169px" width="15" height="15"><path d="M3.5 9.5h8L7.5 5.5z" fill="#666"/></svg>
<svg class="r" style="left:1348px;top:635px" width="15" height="14"><path d="M3.5 5h8l-4 4z" fill="#666"/></svg>
<div class="r" style="left:0px;top:677px;width:1367px;height:22px;background:#f1f1f1;"></div>
<div class="r" style="left:0px;top:677px;width:1367px;height:1px;background:#dcdcdc;"></div>
<div class="r" style="left:0px;top:699px;width:48px;height:1px;background:#111111;"></div>
<div class="r" style="left:48px;top:699px;width:344px;height:1px;background:#c8c8c8;"></div>
<div class="r" style="left:392px;top:699px;width:975px;height:1px;background:#111111;"></div>
<div class="t" style="left:7.6px;top:682.39px;font-size:11px;color:#444444;font-weight:normal;">Bearbeiten</div>
<svg class="r" style="left:82px;top:681px" width="14" height="13"><circle cx="3" cy="3" r="2.6" fill="#777"/><path d="M6 1.5h7v3M1 6.5h12v6H1zM1 9.5h12M4.5 6.5v6M8 6.5v6M11 6.5v6" fill="none" stroke="#777" stroke-width="1"/></svg>
<svg class="r" style="left:1082px;top:681px" width="15" height="14"><path d="M.5 .5h14v13H.5zM5.2 .5v13M9.8 .5v13M.5 4.8h14M.5 9.2h14" fill="none" stroke="#666" stroke-width="1"/></svg>
<svg class="r" style="left:1121px;top:681px" width="15" height="14"><path d="M.5 .5h14v13H.5zM3.5 3.5h8v7h-8zM5 5.5h5M5 7h5M5 8.5h5" fill="none" stroke="#666" stroke-width="1"/></svg>
<svg class="r" style="left:1159px;top:681px" width="14" height="14"><path d="M.5 .5h13v13H.5zM.5 7.5h7v-7M4 .5v7" fill="none" stroke="#666" stroke-width="1"/></svg>
<div class="r" style="left:1189px;top:687px;width:7px;height:2px;background:#9a9a9a;"></div>
<div class="r" style="left:1200px;top:687px;width:100px;height:1px;background:#b0b0b0;"></div>
<div class="r" style="left:1250px;top:683px;width:1px;height:9px;background:#a0a0a0;"></div>
<svg class="r" style="left:1303px;top:682px" width="11" height="11"><path d="M5.5 .5v10M.5 5.5h10" stroke="#8a8a8a" stroke-width="2"/></svg>
<div class="t" style="left:1328px;top:682.09px;font-size:11px;color:#9a9a9a;font-weight:normal;">100 %</div>
<div class="r" style="left:539px;top:245px;width:724px;height:338px;background:#ffffff;box-sizing:border-box;border:1px solid #d9d9d9;"></div>
<div class="t" style="left:600.5px;width:600px;text-align:center;top:258.16px;font-size:17.3px;color:#595959;font-weight:normal;">Diagrammtitel</div>
<svg class="r" style="left:539px;top:245px" width="724" height="338" viewBox="539 245 724 338"><defs><linearGradient id="w0" gradientUnits="userSpaceOnUse" x1="1039.84" y1="0" x2="1101.22" y2="0"><stop offset="0.0000" stop-color="#28455f"/><stop offset="0.0461" stop-color="#28455f"/><stop offset="0.0913" stop-color="#28445e"/><stop offset="0.1354" stop-color="#28445d"/><stop offset="0.1785" stop-color="#27435c"/><stop offset="0.2205" stop-color="#27435c"/><stop offset="0.2614" stop-color="#27425b"/><stop offset="0.3013" stop-color="#26425a"/><stop offset="0.3402" stop-color="#26415a"/><stop offset="0.3779" stop-color="#264159"/><stop offset="0.4145" stop-color="#264058"/><stop offset="0.4501" stop-color="#254058"/><stop offset="0.4845" stop-color="#253f57"/><stop offset="0.5179" stop-color="#253f57"/><stop offset="0.5501" stop-color="#243f56"/><stop offset="0.5812" stop-color="#243e56"/><stop offset="0.6111" stop-color="#243e55"/><stop offset="0.6400" stop-color="#243d54"/><stop offset="0.6677" stop-color="#243d54"/><stop offset="0.6943" stop-color="#233d53"/><stop offset="0.7197" stop-color="#233c53"/><stop offset="0.7440" stop-color="#233c52"/><stop offset="0.7672" stop-color="#233b52"/><stop offset="0.7893" stop-color="#223b51"/><stop offset="0.8103" stop-color="#223b51"/><stop offset="0.8301" stop-color="#223a50"/><stop offset="0.8488" stop-color="#223a50"/><stop offset="0.8663" stop-color="#223a50"/><stop offset="0.8828" stop-color="#223a4f"/><stop offset="0.8982" stop-color="#21394f"/><stop offset="0.9124" stop-color="#21394e"/><stop offset="0.9256" stop-color="#21394e"/><stop offset="0.9376" stop-color="#21384e"/><stop offset="0.9486" stop-color="#21384d"/><stop offset="0.9585" stop-color="#21384d"/><stop offset="0.9673" stop-color="#21384d"/><stop offset="0.9750" stop-color="#20384d"/><stop offset="0.9817" stop-color="#20374c"/><stop offset="0.9873" stop-color="#20374c"/><stop offset="0.9919" stop-color="#20374c"/><stop offset="0.9955" stop-color="#20374c"/><stop offset="0.9980" stop-color="#20374b"/><stop offset="0.9995" stop-color="#20374b"/><stop offset="1.0000" stop-color="#20364b"/></linearGradient><linearGradient id="w1" gradientUnits="userSpaceOnUse" x1="1000.96" y1="0" x2="1039.84" y2="0"><stop offset="0.0000" stop-color="#753d18"/><stop offset="0.0910" stop-color="#743d18"/><stop offset="0.1806" stop-color="#733c17"/><stop offset="0.2690" stop-color="#723c17"/><stop offset="0.3560" stop-color="#713b17"/><stop offset="0.4417" stop-color="#703b17"/><stop offset="0.5259" stop-color="#6f3a17"/><stop offset="0.6087" stop-color="#6e3a16"/><stop offset="0.6900" stop-color="#6d3916"/><stop offset="0.7698" stop-color="#6d3916"/><stop offset="0.8481" stop-color="#6c3916"/><stop offset="0.9248" stop-color="#6b3816"/><stop offset="1.0000" stop-color="#6a3816"/></linearGradient><linearGradient id="w2" gradientUnits="userSpaceOnUse" x1="990.24" y1="0" x2="1000.96" y2="0"><stop offset="0.0000" stop-color="#535353"/><stop offset="0.3374" stop-color="#525252"/><stop offset="0.6708" stop-color="#525252"/><stop offset="1.0000" stop-color="#515151"/></linearGradient><linearGradient id="w3" gradientUnits="userSpaceOnUse" x1="916.59" y1="0" x2="990.24" y2="0"><stop offset="0.0000" stop-color="#947000"/><stop offset="0.0551" stop-color="#936f00"/><stop offset="0.1100" stop-color="#926e00"/><stop offset="0.1648" stop-color="#916d00"/><stop offset="0.2194" stop-color="#906c00"/><stop offset="0.2738" stop-color="#8f6c00"/><stop offset="0.3280" stop-color="#8e6b00"/><stop offset="0.3819" stop-color="#8d6a00"/><stop offset="0.4356" stop-color="#8c6900"/><stop offset="0.4889" stop-color="#8b6800"/><stop offset="0.5419" stop-color="#8a6800"/><stop offset="0.5945" stop-color="#896700"/><stop offset="0.6468" stop-color="#886600"/><stop offset="0.6986" stop-color="#876500"/><stop offset="0.7500" stop-color="#866400"/><stop offset="0.8010" stop-color="#856400"/><stop offset="0.8515" stop-color="#846300"/><stop offset="0.9015" stop-color="#836200"/><stop offset="0.9510" stop-color="#826100"/><stop offset="1.0000" stop-color="#816100"/></linearGradient><linearGradient id="w4" gradientUnits="userSpaceOnUse" x1="890.46" y1="0" x2="916.59" y2="0"><stop offset="0.0000" stop-color="#294577"/><stop offset="0.1428" stop-color="#294576"/><stop offset="0.2858" stop-color="#284476"/><stop offset="0.4288" stop-color="#284475"/><stop offset="0.5718" stop-color="#284374"/><stop offset="0.7147" stop-color="#284373"/><stop offset="0.8574" stop-color="#274273"/><stop offset="1.0000" stop-color="#274272"/></linearGradient><linearGradient id="w5" gradientUnits="userSpaceOnUse" x1="876.91" y1="0" x2="890.46" y2="0"><stop offset="0.0000" stop-color="#456c2c"/><stop offset="0.2493" stop-color="#456b2c"/><stop offset="0.4992" stop-color="#456a2b"/><stop offset="0.7494" stop-color="#446a2b"/><stop offset="1.0000" stop-color="#44692b"/></linearGradient><linearGradient id="w6" gradientUnits="userSpaceOnUse" x1="832.84" y1="0" x2="876.91" y2="0"><stop offset="0.0000" stop-color="#183f61"/><stop offset="0.0880" stop-color="#183e60"/><stop offset="0.1768" stop-color="#183e60"/><stop offset="0.2662" stop-color="#183d5f"/><stop offset="0.3562" stop-color="#183d5e"/><stop offset="0.4468" stop-color="#183d5e"/><stop offset="0.5379" stop-color="#173c5d"/><stop offset="0.6295" stop-color="#173c5d"/><stop offset="0.7216" stop-color="#173b5c"/><stop offset="0.8141" stop-color="#173b5b"/><stop offset="0.9069" stop-color="#173b5b"/><stop offset="1.0000" stop-color="#173a5a"/></linearGradient><linearGradient id="w7" gradientUnits="userSpaceOnUse" x1="699.98" y1="0" x2="832.84" y2="0"><stop offset="0.0000" stop-color="#853c0b"/><stop offset="0.0002" stop-color="#853c0b"/><stop offset="0.0010" stop-color="#853c0b"/><stop offset="0.0022" stop-color="#853c0b"/><stop offset="0.0038" stop-color="#843c0b"/><stop offset="0.0060" stop-color="#843c0b"/><stop offset="0.0087" stop-color="#843c0b"/><stop offset="0.0119" stop-color="#843c0b"/><stop offset="0.0156" stop-color="#843c0b"/><stop offset="0.0197" stop-color="#833c0b"/><stop offset="0.0244" stop-color="#833c0b"/><stop offset="0.0297" stop-color="#833b0b"/><stop offset="0.0354" stop-color="#833b0b"/><stop offset="0.0416" stop-color="#823b0b"/><stop offset="0.0484" stop-color="#823b0b"/><stop offset="0.0557" stop-color="#823b0b"/><stop offset="0.0636" stop-color="#823b0b"/><stop offset="0.0719" stop-color="#813b0b"/><stop offset="0.0808" stop-color="#813a0b"/><stop offset="0.0902" stop-color="#813a0b"/><stop offset="0.1002" stop-color="#803a0b"/><stop offset="0.1107" stop-color="#803a0b"/><stop offset="0.1217" stop-color="#803a0b"/><stop offset="0.1333" stop-color="#7f3a0b"/><stop offset="0.1454" stop-color="#7f390b"/><stop offset="0.1580" stop-color="#7e390b"/><stop offset="0.1712" stop-color="#7e390b"/><stop offset="0.1849" stop-color="#7e390b"/><stop offset="0.1992" stop-color="#7d390b"/><stop offset="0.2139" stop-color="#7d390b"/><stop offset="0.2293" stop-color="#7c380b"/><stop offset="0.2451" stop-color="#7c380b"/><stop offset="0.2615" stop-color="#7b380a"/><stop offset="0.2784" stop-color="#7b380a"/><stop offset="0.2958" stop-color="#7a380a"/><stop offset="0.3137" stop-color="#7a370a"/><stop offset="0.3322" stop-color="#79370a"/><stop offset="0.3511" stop-color="#79370a"/><stop offset="0.3706" stop-color="#78370a"/><stop offset="0.3905" stop-color="#78360a"/><stop offset="0.4110" stop-color="#77360a"/><stop offset="0.4319" stop-color="#77360a"/><stop offset="0.4534" stop-color="#76360a"/><stop offset="0.4753" stop-color="#76350a"/><stop offset="0.4976" stop-color="#75350a"/><stop offset="0.5205" stop-color="#75350a"/><stop offset="0.5438" stop-color="#74350a"/><stop offset="0.5675" stop-color="#73340a"/><stop offset="0.5917" stop-color="#73340a"/><stop offset="0.6163" stop-color="#72340a"/><stop offset="0.6413" stop-color="#72340a"/><stop offset="0.6667" stop-color="#71330a"/><stop offset="0.6926" stop-color="#70330a"/><stop offset="0.7188" stop-color="#703309"/><stop offset="0.7454" stop-color="#6f3209"/><stop offset="0.7724" stop-color="#6f3209"/><stop offset="0.7997" stop-color="#6e3209"/><stop offset="0.8274" stop-color="#6d3209"/><stop offset="0.8554" stop-color="#6d3109"/><stop offset="0.8837" stop-color="#6c3109"/><stop offset="0.9124" stop-color="#6b3109"/><stop offset="0.9413" stop-color="#6b3009"/><stop offset="0.9705" stop-color="#6a3009"/><stop offset="1.0000" stop-color="#693009"/></linearGradient></defs><path d="M1101.22,391.29 L1101.19,392.94 L1101.10,394.60 L1100.95,396.26 L1100.73,397.92 L1100.45,399.59 L1100.10,401.26 L1099.69,402.93 L1099.21,404.60 L1098.67,406.28 L1098.07,407.95 L1097.39,409.63 L1096.65,411.30 L1095.85,412.97 L1094.97,414.64 L1094.03,416.31 L1093.02,417.98 L1091.94,419.64 L1090.79,421.30 L1089.58,422.95 L1088.29,424.60 L1086.94,426.24 L1085.51,427.87 L1084.02,429.49 L1082.46,431.11 L1080.83,432.71 L1079.13,434.31 L1077.35,435.90 L1075.52,437.47 L1073.61,439.03 L1071.63,440.58 L1069.58,442.11 L1067.47,443.63 L1065.29,445.14 L1063.04,446.63 L1060.72,448.10 L1058.34,449.55 L1055.89,450.99 L1053.38,452.40 L1050.80,453.80 L1048.15,455.17 L1045.45,456.53 L1042.68,457.86 L1039.84,459.17 L1036.22,506.25 L1038.98,504.97 L1041.68,503.68 L1044.32,502.36 L1046.89,501.02 L1049.41,499.66 L1051.85,498.28 L1054.24,496.88 L1056.56,495.46 L1058.82,494.03 L1061.01,492.58 L1063.13,491.11 L1065.19,489.63 L1067.18,488.14 L1069.11,486.63 L1070.97,485.11 L1072.76,483.58 L1074.48,482.03 L1076.14,480.48 L1077.73,478.91 L1079.25,477.34 L1080.71,475.76 L1082.09,474.17 L1083.41,472.57 L1084.66,470.97 L1085.85,469.36 L1086.97,467.75 L1088.02,466.13 L1089.00,464.51 L1089.92,462.88 L1090.77,461.25 L1091.56,459.62 L1092.28,457.99 L1092.93,456.36 L1093.52,454.73 L1094.05,453.10 L1094.51,451.47 L1094.91,449.84 L1095.25,448.21 L1095.52,446.59 L1095.74,444.97 L1095.89,443.35 L1095.98,441.74 L1096.01,440.14Z" fill="url(#w0)"/><path d="M1039.84,459.17 L1036.92,460.47 L1033.94,461.74 L1030.89,462.99 L1027.79,464.21 L1024.63,465.40 L1021.41,466.57 L1018.13,467.70 L1014.80,468.81 L1011.42,469.89 L1007.98,470.93 L1004.49,471.95 L1000.96,472.93 L998.35,519.65 L1001.79,518.69 L1005.19,517.71 L1008.54,516.69 L1011.83,515.64 L1015.08,514.56 L1018.27,513.45 L1021.40,512.32 L1024.48,511.15 L1027.51,509.97 L1030.47,508.75 L1033.38,507.51 L1036.22,506.25Z" fill="url(#w1)"/><path d="M1000.96,472.93 L997.43,473.87 L993.86,474.77 L990.24,475.64 L987.91,522.29 L991.43,521.44 L994.91,520.56 L998.35,519.65Z" fill="url(#w2)"/><path d="M990.24,475.64 L986.63,476.47 L982.99,477.26 L979.31,478.02 L975.59,478.74 L971.83,479.43 L968.04,480.09 L964.23,480.71 L960.38,481.29 L956.50,481.84 L952.60,482.35 L948.67,482.83 L944.72,483.27 L940.75,483.67 L936.76,484.03 L932.75,484.36 L928.73,484.64 L924.70,484.89 L920.65,485.10 L916.59,485.28 L916.18,531.68 L920.13,531.51 L924.07,531.30 L928.00,531.06 L931.92,530.78 L935.82,530.46 L939.71,530.11 L943.57,529.72 L947.42,529.29 L951.25,528.83 L955.05,528.33 L958.82,527.80 L962.57,527.23 L966.29,526.62 L969.98,525.98 L973.64,525.31 L977.26,524.61 L980.85,523.87 L984.40,523.09 L987.91,522.29Z" fill="url(#w3)"/><path d="M916.59,485.28 L912.87,485.40 L909.14,485.49 L905.40,485.55 L901.67,485.57 L897.93,485.57 L894.19,485.53 L890.46,485.46 L890.72,531.85 L894.36,531.92 L898.00,531.96 L901.64,531.97 L905.28,531.94 L908.91,531.88 L912.55,531.80 L916.18,531.68Z" fill="url(#w4)"/><path d="M890.46,485.46 L887.07,485.36 L883.67,485.24 L880.29,485.09 L876.91,484.92 L877.52,531.32 L880.82,531.50 L884.11,531.64 L887.42,531.76 L890.72,531.85Z" fill="url(#w5)"/><path d="M876.91,484.92 L872.80,484.67 L868.71,484.38 L864.64,484.05 L860.58,483.68 L856.55,483.28 L852.53,482.83 L848.54,482.35 L844.57,481.82 L840.63,481.27 L836.72,480.67 L832.84,480.04 L834.60,526.57 L838.38,527.19 L842.19,527.77 L846.03,528.31 L849.89,528.82 L853.78,529.29 L857.69,529.73 L861.62,530.12 L865.58,530.48 L869.54,530.80 L873.53,531.08 L877.52,531.32Z" fill="url(#w6)"/><path d="M832.84,480.04 L828.92,479.35 L825.04,478.63 L821.20,477.88 L817.39,477.08 L813.63,476.26 L809.91,475.39 L806.23,474.49 L802.60,473.56 L799.02,472.60 L795.48,471.60 L792.00,470.57 L788.56,469.50 L785.18,468.41 L781.86,467.29 L778.59,466.14 L775.38,464.96 L772.22,463.75 L769.13,462.51 L766.10,461.25 L763.12,459.96 L760.21,458.65 L757.37,457.31 L754.58,455.95 L751.86,454.57 L749.21,453.16 L746.63,451.74 L744.11,450.29 L741.66,448.83 L739.27,447.34 L736.96,445.84 L734.72,444.32 L732.54,442.79 L730.44,441.24 L728.40,439.67 L726.44,438.09 L724.55,436.50 L722.72,434.90 L720.97,433.28 L719.29,431.66 L717.68,430.02 L716.15,428.38 L714.68,426.72 L713.29,425.06 L711.96,423.40 L710.71,421.72 L709.53,420.04 L708.42,418.36 L707.38,416.67 L706.41,414.98 L705.51,413.28 L704.68,411.59 L703.92,409.89 L703.22,408.19 L702.60,406.49 L702.04,404.79 L701.55,403.10 L701.13,401.40 L700.78,399.71 L700.49,398.02 L700.26,396.33 L700.10,394.65 L700.01,392.97 L699.98,391.29 L705.19,440.14 L705.22,441.77 L705.32,443.40 L705.47,445.04 L705.69,446.68 L705.97,448.33 L706.32,449.98 L706.73,451.63 L707.21,453.28 L707.75,454.94 L708.36,456.59 L709.03,458.25 L709.77,459.90 L710.58,461.55 L711.46,463.21 L712.40,464.85 L713.42,466.50 L714.50,468.14 L715.65,469.77 L716.87,471.40 L718.16,473.03 L719.52,474.65 L720.94,476.26 L722.44,477.86 L724.01,479.45 L725.64,481.03 L727.35,482.61 L729.12,484.17 L730.97,485.72 L732.88,487.26 L734.86,488.78 L736.91,490.29 L739.03,491.79 L741.22,493.26 L743.47,494.73 L745.79,496.17 L748.18,497.60 L750.63,499.01 L753.15,500.40 L755.73,501.76 L758.38,503.11 L761.09,504.44 L763.86,505.74 L766.70,507.02 L769.59,508.27 L772.55,509.50 L775.56,510.71 L778.63,511.88 L781.76,513.03 L784.95,514.16 L788.18,515.25 L791.48,516.31 L794.82,517.35 L798.21,518.35 L801.66,519.33 L805.15,520.27 L808.68,521.17 L812.27,522.05 L815.89,522.89 L819.56,523.70 L823.26,524.47 L827.01,525.21 L830.79,525.91 L834.60,526.57Z" fill="url(#w7)"/><path d="M1039.84,459.17 L1036.22,506.25" stroke="#ffffff" stroke-width="0.9" opacity="0.85"/><path d="M1000.96,472.93 L998.35,519.65" stroke="#ffffff" stroke-width="0.9" opacity="0.85"/><path d="M990.24,475.64 L987.91,522.29" stroke="#ffffff" stroke-width="0.9" opacity="0.85"/><path d="M916.59,485.28 L916.18,531.68" stroke="#ffffff" stroke-width="0.9" opacity="0.85"/><path d="M890.46,485.46 L890.72,531.85" stroke="#ffffff" stroke-width="0.9" opacity="0.85"/><path d="M876.91,484.92 L877.52,531.32" stroke="#ffffff" stroke-width="0.9" opacity="0.85"/><path d="M832.84,480.04 L834.60,526.57" stroke="#ffffff" stroke-width="0.9" opacity="0.85"/><path d="M900.60,373.70 L900.60,297.01 L906.36,297.05 L912.11,297.17 L917.86,297.36 L923.60,297.63 L929.32,297.98 L935.03,298.41 L940.71,298.91 L946.37,299.50 L951.99,300.16 L957.59,300.89 L963.14,301.71 L968.65,302.60 L974.12,303.57 L979.54,304.62 L984.91,305.74 L990.22,306.94 L995.46,308.22 L1000.64,309.57 L1005.75,311.00 L1010.79,312.50 L1015.74,314.08 L1020.61,315.74 L1025.39,317.47 L1030.08,319.27 L1034.67,321.15 L1039.15,323.10 L1043.52,325.13 L1047.78,327.22 L1051.93,329.39 L1055.94,331.63 L1059.83,333.94 L1063.58,336.31 L1067.19,338.75 L1070.65,341.26 L1073.96,343.84 L1077.10,346.47 L1080.09,349.17 L1082.90,351.93 L1085.54,354.75 L1087.99,357.62 L1090.26,360.55 L1092.33,363.53 L1094.20,366.56 L1095.86,369.64 L1097.31,372.76 L1098.54,375.92 L1099.55,379.12 L1100.32,382.36 L1100.86,385.63 L1101.16,388.93 L1101.21,392.25 L1101.01,395.60 L1100.56,398.96 L1099.84,402.33 L1098.86,405.71 L1097.62,409.09 L1096.10,412.47 L1094.30,415.85 L1092.23,419.21 L1089.87,422.56 L1087.24,425.88 L1084.32,429.17 L1081.12,432.43 L1077.64,435.64 L1073.88,438.81 L1069.83,441.93 L1065.51,444.99 L1060.91,447.98 L1056.04,450.90 L1050.90,453.74 L1045.50,456.50 L1039.84,459.17Z" fill="#5B9BD5" stroke="#ffffff" stroke-width="0.9" stroke-linejoin="round"/><path d="M900.60,373.70 L1039.84,459.17 L1033.94,461.74 L1027.79,464.21 L1021.41,466.57 L1014.80,468.81 L1007.98,470.93 L1000.96,472.93Z" fill="#ED7D31" stroke="#ffffff" stroke-width="0.9" stroke-linejoin="round"/><path d="M900.60,373.70 L1000.96,472.93 L995.65,474.32 L990.24,475.64Z" fill="#A5A5A5" stroke="#ffffff" stroke-width="0.9" stroke-linejoin="round"/><path d="M900.60,373.70 L990.24,475.64 L983.36,477.18 L976.33,478.60 L969.18,479.90 L961.92,481.06 L954.55,482.10 L947.09,483.01 L939.56,483.78 L931.95,484.42 L924.29,484.92 L916.59,485.28Z" fill="#FFC000" stroke="#ffffff" stroke-width="0.9" stroke-linejoin="round"/><path d="M900.60,373.70 L916.59,485.28 L910.07,485.47 L903.53,485.57 L897.00,485.56 L890.46,485.46Z" fill="#4472C4" stroke="#ffffff" stroke-width="0.9" stroke-linejoin="round"/><path d="M900.60,373.70 L890.46,485.46 L883.67,485.24 L876.91,484.92Z" fill="#70AD47" stroke="#ffffff" stroke-width="0.9" stroke-linejoin="round"/><path d="M900.60,373.70 L876.91,484.92 L869.40,484.43 L861.93,483.81 L854.54,483.06 L847.21,482.18 L839.98,481.17 L832.84,480.04Z" fill="#255E91" stroke="#ffffff" stroke-width="0.9" stroke-linejoin="round"/><path d="M900.60,373.70 L832.84,480.04 L825.08,478.64 L817.46,477.10 L810.00,475.42 L802.72,473.59 L795.63,471.64 L788.74,469.56 L782.06,467.36 L775.59,465.04 L769.36,462.61 L763.37,460.07 L757.63,457.44 L752.14,454.71 L746.91,451.90 L741.95,449.00 L737.25,446.03 L732.83,443.00 L728.69,439.90 L724.83,436.75 L721.25,433.55 L717.95,430.30 L714.94,427.02 L712.21,423.71 L709.76,420.37 L707.59,417.02 L705.70,413.64 L704.08,410.27 L702.74,406.88 L701.66,403.50 L700.86,400.12 L700.31,396.76 L700.03,393.41 L699.99,390.08 L700.21,386.77 L700.66,383.49 L701.36,380.24 L702.29,377.03 L703.44,373.85 L704.81,370.71 L706.40,367.62 L708.20,364.57 L710.20,361.58 L712.40,358.63 L714.79,355.74 L717.36,352.90 L720.12,350.12 L723.04,347.40 L726.14,344.74 L729.39,342.15 L732.80,339.62 L736.36,337.15 L740.06,334.75 L743.90,332.42 L747.87,330.16 L751.97,327.97 L756.19,325.85 L760.52,323.80 L764.97,321.82 L769.52,319.92 L774.18,318.09 L778.92,316.33 L783.76,314.65 L788.69,313.04 L793.70,311.51 L798.78,310.06 L803.94,308.68 L809.16,307.37 L814.45,306.15 L819.79,305.00 L825.19,303.92 L830.65,302.93 L836.14,302.01 L841.69,301.17Z" fill="#9E480E" stroke="#ffffff" stroke-width="0.9" stroke-linejoin="round"/><path d="M900.60,373.70 L841.69,301.17 L847.27,300.40 L852.88,299.72 L858.53,299.11 L864.20,298.57 L869.90,298.12 L875.62,297.74Z" fill="#636363" stroke="#ffffff" stroke-width="0.9" stroke-linejoin="round"/><path d="M900.60,373.70 L875.62,297.74 L880.67,297.48 L885.74,297.27Z" fill="#997300" stroke="#ffffff" stroke-width="0.9" stroke-linejoin="round"/><path d="M900.60,373.70 L885.74,297.27 L890.69,297.13 L895.64,297.04 L900.60,297.01Z" fill="#264478" stroke="#ffffff" stroke-width="0.9" stroke-linejoin="round"/></svg>
<div class="r" style="left:582px;top:560px;width:4px;height:4px;background:#5B9BD5;"></div>
<div class="t" style="left:589.3px;top:557.09px;font-size:11px;color:#595959;font-weight:normal;">Miete</div>
<div class="r" style="left:624px;top:560px;width:4px;height:4px;background:#ED7D31;"></div>
<div class="t" style="left:631px;top:557.09px;font-size:11px;color:#595959;font-weight:normal;">Strom</div>
<div class="r" style="left:667px;top:560px;width:4px;height:4px;background:#A5A5A5;"></div>
<div class="t" style="left:674.3px;top:557.09px;font-size:11px;color:#595959;font-weight:normal;">Lebensmittel</div>
<div class="r" style="left:744px;top:560px;width:4px;height:4px;background:#FFC000;"></div>
<div class="t" style="left:751.5px;top:557.09px;font-size:11px;color:#595959;font-weight:normal;">Sprit</div>
<div class="r" style="left:780px;top:560px;width:4px;height:4px;background:#4472C4;"></div>
<div class="t" style="left:787.3px;top:557.09px;font-size:11px;color:#595959;font-weight:normal;">Lebensmittel</div>
<div class="r" style="left:857px;top:560px;width:4px;height:4px;background:#70AD47;"></div>
<div class="t" style="left:863.7px;top:557.09px;font-size:11px;color:#595959;font-weight:normal;">Sozialleben</div>
<div class="r" style="left:926px;top:560px;width:4px;height:4px;background:#255E91;"></div>
<div class="t" style="left:932.7px;top:557.09px;font-size:11px;color:#595959;font-weight:normal;">Lebensmittel</div>
<div class="r" style="left:1002px;top:560px;width:4px;height:4px;background:#9E480E;"></div>
<div class="t" style="left:1009.2px;top:557.09px;font-size:11px;color:#595959;font-weight:normal;">Miete</div>
<div class="r" style="left:1044px;top:560px;width:4px;height:4px;background:#636363;"></div>
<div class="t" style="left:1051px;top:557.09px;font-size:11px;color:#595959;font-weight:normal;">Strom</div>
<div class="r" style="left:1088px;top:560px;width:4px;height:4px;background:#997300;"></div>
<div class="t" style="left:1094.8px;top:557.09px;font-size:11px;color:#595959;font-weight:normal;">Sozialleben</div>
<div class="r" style="left:1156px;top:560px;width:4px;height:4px;background:#264478;"></div>
<div class="t" style="left:1163.3px;top:557.09px;font-size:11px;color:#595959;font-weight:normal;">Lebensmittel</div>
<svg class="r" style="left:18px;top:35px" width="30" height="30" viewBox="0 0 30 30"><rect x="1.5" y="1.5" width="27" height="27" fill="#f7f7f7" stroke="#a9a9a9" stroke-width="1.3"/><rect x="10" y="4.3" width="16.6" height="4.4" fill="#c9c9c9"/><rect x="4" y="4.3" width="4.9" height="21.4" fill="#c9c9c9"/><path d="M11.5 22.5c6 0 11-3.5 11-10" fill="none" stroke="#a9a9a9" stroke-width="1.6"/><path d="M19.5 13.5l3-3.5 3 3.5M14 19.5l-3 3 3 3" fill="none" stroke="#a9a9a9" stroke-width="1.6"/></svg>
<svg class="r" style="left:84px;top:36px" width="30" height="31" viewBox="0 0 30 31"><rect x="1.5" y="1.5" width="23.4" height="23.4" fill="#f7f7f7" stroke="#a9a9a9" stroke-width="1.3"/><rect x="9" y="4" width="13" height="4" fill="#c9c9c9"/><rect x="4" y="4" width="4" height="18" fill="#c9c9c9"/><path d="M10 11h9M10 14h9M10 17h9M10 20h9" stroke="#c9c9c9" stroke-width="1"/><path d="M16.3 14.5c0-3 2.4-4.6 5.2-4.6 2.9 0 5 1.8 5 4.3 0 3.3-4.3 3.6-4.3 7v1.3" fill="none" stroke="#a3a3a3" stroke-width="3"/><rect x="20.3" y="26" width="3.4" height="3.4" fill="#a3a3a3"/></svg>
<svg class="r" style="left:138px;top:35px" width="30" height="30" viewBox="0 0 30 30"><rect x="1.5" y="1.5" width="27" height="27" fill="#f9f9f9" stroke="#a9a9a9" stroke-width="1.2"/><rect x="1" y="1" width="28" height="4.5" fill="#a9a9a9"/><path d="M10.5 5.5v23M19.5 5.5v23M1.5 9.5h27M1.5 13.5h27M1.5 17.5h27M1.5 21.5h27M1.5 25.5h27" stroke="#c4c4c4" stroke-width="1"/><path d="M4 2.5h3l-1.5 2zM13.5 2.5h3l-1.5 2zM22.5 2.5h3l-1.5 2z" fill="#fff"/></svg>
<svg class="r" style="left:189px;top:35px" width="33" height="33" viewBox="0 0 33 33"><rect x="1.5" y="1.5" width="27.4" height="27.4" fill="#f7f5f7" stroke="#a9a9a9" stroke-width="1.2"/><circle cx="22" cy="8" r="2.4" fill="#d6d6d6"/><path d="M2 28.5V19l6-5 8 8v6.5z" fill="#d8d8d8"/><rect x="15.5" y="16.5" width="15" height="11.4" fill="#f7f7f7" stroke="#9c9c9c" stroke-width="1.5"/><path d="M21 30.5h4" stroke="#9c9c9c" stroke-width="1.2"/></svg>
<svg class="r" style="left:251px;top:35px" width="35" height="33" viewBox="0 0 35 33"><rect x="1.5" y="1.5" width="27.4" height="27.4" fill="#f7f5f7" stroke="#a9a9a9" stroke-width="1.2"/><circle cx="22" cy="8" r="2.4" fill="#d6d6d6"/><path d="M2 28.5V19l6-5 8 8v6.5z" fill="#d8d8d8"/><circle cx="23.4" cy="23" r="7.3" fill="#f7f7f7" stroke="#9c9c9c" stroke-width="1.3"/><path d="M16.5 20.5h14M16.5 25.5h14M23.4 15.7v14.6M20 16.5c-2 4-2 9 0 13M26.8 16.5c2 4 2 9 0 13" fill="none" stroke="#9c9c9c" stroke-width="1"/></svg>
<svg class="r" style="left:310px;top:33px" width="19" height="17" viewBox="0 0 19 17"><rect x="1" y="4" width="9" height="8" fill="none" stroke="#a9a9a9" stroke-width="1.2"/><circle cx="12" cy="5.5" r="4.5" fill="#f1f1f1" stroke="#a9a9a9" stroke-width="1.2"/><path d="M11.5 7l4.5 4.5-4.5 4.5-4.5-4.5z" fill="#f1f1f1" stroke="#a9a9a9" stroke-width="1.2"/></svg>
<svg class="r" style="left:331px;top:41px" width="7" height="4" viewBox="0 0 7 4"><path d="M.5 .5h6L3.5 3.5z" fill="#c4c4c4"/></svg>
<svg class="r" style="left:310px;top:56px" width="18" height="18" viewBox="0 0 18 18"><path d="M2 1h11l3 4H2z" fill="#a9a9a9"/><path d="M1 5l3 4" stroke="#a9a9a9" stroke-width="2"/><rect x="6" y="7" width="10.5" height="9.5" fill="#f3f3f3" stroke="#a9a9a9" stroke-width="1.2"/><path d="M8.5 10.5h6M8.5 13.5h6" stroke="#bdbdbd" stroke-width="1"/></svg>
<svg class="r" style="left:310px;top:80px" width="18" height="17" viewBox="0 0 18 17"><path d="M1 1h16M1 4h16M4 1v6M8 1v6M12 1v6" stroke="#dedede" stroke-width="1" stroke-dasharray="1 1"/><path d="M1 9h3l1-1.5h3l1 1.5h1v6H1z" fill="#a9a9a9"/><circle cx="5.5" cy="12" r="1.8" fill="#e8e8e8"/><path d="M14 9v6M11 12h6" stroke="#a9a9a9" stroke-width="2"/></svg>
<svg class="r" style="left:331px;top:86px" width="7" height="4" viewBox="0 0 7 4"><path d="M.5 .5h6L3.5 3.5z" fill="#c4c4c4"/></svg>
<svg class="r" style="left:353px;top:41px" width="16" height="17" viewBox="0 0 16 17"><path d="M1 5h14v11l-3-1H1z" fill="#aaaaaa"/><path d="M5 5V2.5h6V5" fill="none" stroke="#aaaaaa" stroke-width="1.2"/></svg>
<svg class="r" style="left:353px;top:73px" width="16" height="16" viewBox="0 0 16 16"><path d="M5 3l5-2 5 2v9l-5 3-5-2z" fill="#a3a3a3"/><path d="M10 4v10" stroke="#8e8e8e" stroke-width="1"/><circle cx="4" cy="11" r="3.3" fill="#b2b2b2"/></svg>
<svg class="r" style="left:460px;top:80px" width="7" height="4" viewBox="0 0 7 4"><path d="M.5 .5h6L3.5 3.5z" fill="#c2c2c2"/></svg>
<svg class="r" style="left:472px;top:41px" width="18" height="18" viewBox="0 0 18 18"><rect x="1" y="1" width="16" height="16" fill="#c8c8c8"/><path d="M6 3.5v10l5-2.5-2-1" fill="none" stroke="#f3f3f3" stroke-width="1.6"/></svg>
<svg class="r" style="left:472px;top:72px" width="18" height="18" viewBox="0 0 18 18"><rect x="1" y="1" width="16" height="16" fill="#9e9e9e"/><path d="M3 4h8M3 6h5" stroke="#c6c6c6" stroke-width="1"/><circle cx="11" cy="8" r="1.8" fill="#f0f0f0"/><path d="M8 15c0-3 1.3-4.5 3-4.5s3 1.5 3 4.5z" fill="#f0f0f0"/></svg>
<svg class="r" style="left:521px;top:35px" width="32" height="33" viewBox="0 0 32 33"><rect x="2" y="9.5" width="7" height="18.5" fill="#a8a8a8"/><rect x="10" y="1.5" width="7.3" height="26.5" fill="#d0d0d0"/><rect x="18" y="7" width="7" height="21" fill="#b8b8b8"/><path d="M18 17c0-3.2 2.6-5 5.6-5 3.1 0 5.4 1.9 5.4 4.6 0 3.5-4.6 3.9-4.6 7.5v1.2" fill="none" stroke="#f1f1f1" stroke-width="5.5"/><path d="M18 17c0-3.2 2.6-5 5.6-5 3.1 0 5.4 1.9 5.4 4.6 0 3.5-4.6 3.9-4.6 7.5v1.2" fill="none" stroke="#a3a3a3" stroke-width="3"/><rect x="22.7" y="27.7" width="3.5" height="3.5" fill="#a3a3a3"/></svg>
<svg class="r" style="left:573px;top:34px" width="17" height="16" viewBox="0 0 17 16"><rect x="1" y="6" width="4" height="9" fill="#a9a9a9"/><rect x="6.5" y="1" width="4" height="14" fill="#d3d3d3"/><rect x="12" y="4" width="4" height="11" fill="#a9a9a9"/></svg>
<svg class="r" style="left:593px;top:41px" width="7" height="4" viewBox="0 0 7 4"><path d="M.5 .5h6L3.5 3.5z" fill="#c4c4c4"/></svg>
<svg class="r" style="left:605px;top:34px" width="18" height="16" viewBox="0 0 18 16"><rect x="1" y="1" width="6" height="14" fill="#a5a5a5"/><rect x="8" y="1" width="9" height="7.5" fill="#cfcfcf"/><rect x="8" y="9.5" width="9" height="5.5" fill="#a5a5a5"/></svg>
<svg class="r" style="left:626px;top:41px" width="7" height="4" viewBox="0 0 7 4"><path d="M.5 .5h6L3.5 3.5z" fill="#c4c4c4"/></svg>
<svg class="r" style="left:638px;top:34px" width="17" height="16" viewBox="0 0 17 16"><path d="M1 7h3v8H1zM5 3h3v4H5zM8 1h2v6H8zM11 6h3v3h-3zM13 9h3v6h-3z" fill="#aaaaaa"/><path d="M9 1h2v10H9z" fill="#d0d0d0"/></svg>
<svg class="r" style="left:659px;top:41px" width="7" height="4" viewBox="0 0 7 4"><path d="M.5 .5h6L3.5 3.5z" fill="#c4c4c4"/></svg>
<svg class="r" style="left:573px;top:57px" width="17" height="16" viewBox="0 0 17 16"><path d="M1 14L5 2l4 12 4-12 3 7M1 2l4 12 4-12 4 12 3-6" fill="none" stroke="#a9a9a9" stroke-width="1.3"/></svg>
<svg class="r" style="left:593px;top:63px" width="7" height="4" viewBox="0 0 7 4"><path d="M.5 .5h6L3.5 3.5z" fill="#c4c4c4"/></svg>
<svg class="r" style="left:605px;top:57px" width="18" height="16" viewBox="0 0 18 16"><rect x="1" y="6" width="3" height="9" fill="#a9a9a9"/><rect x="5" y="2" width="3" height="13" fill="#a9a9a9"/><rect x="9" y="5" width="3" height="10" fill="#a9a9a9"/><rect x="13" y="9" width="3" height="6" fill="#a9a9a9"/></svg>
<svg class="r" style="left:626px;top:63px" width="7" height="4" viewBox="0 0 7 4"><path d="M.5 .5h6L3.5 3.5z" fill="#c4c4c4"/></svg>
<svg class="r" style="left:638px;top:57px" width="17" height="16" viewBox="0 0 17 16"><rect x="1" y="4" width="4" height="11" fill="#aaaaaa"/><rect x="6" y="7" width="4" height="8" fill="#d0d0d0"/><rect x="11" y="9" width="4" height="6" fill="#aaaaaa"/><path d="M1 1l5 2 5 3 5 2" fill="none" stroke="#9e9e9e" stroke-width="1.6"/></svg>
<svg class="r" style="left:659px;top:63px" width="7" height="4" viewBox="0 0 7 4"><path d="M.5 .5h6L3.5 3.5z" fill="#c4c4c4"/></svg>
<svg class="r" style="left:573px;top:80px" width="17" height="16" viewBox="0 0 17 16"><circle cx="8" cy="8" r="7" fill="#b5b5b5"/><path d="M8 8V1A7 7 0 0 0 1.2 6.5z" fill="#d8d8d8"/><path d="M8 8L2 12" stroke="#e8e8e8" stroke-width="1"/></svg>
<svg class="r" style="left:593px;top:86px" width="7" height="4" viewBox="0 0 7 4"><path d="M.5 .5h6L3.5 3.5z" fill="#c4c4c4"/></svg>
<svg class="r" style="left:605px;top:80px" width="18" height="16" viewBox="0 0 18 16"><path d="M1.5 1v13.5H17" fill="none" stroke="#a9a9a9" stroke-width="1.2"/><path d="M4 11h1.5M6 7h1.5M9 9h1.5M11 4h1.5M13 8h1.5M14 11h1.5M8 12h1.5" stroke="#a9a9a9" stroke-width="1.5"/></svg>
<svg class="r" style="left:626px;top:86px" width="7" height="4" viewBox="0 0 7 4"><path d="M.5 .5h6L3.5 3.5z" fill="#c4c4c4"/></svg>
<svg class="r" style="left:638px;top:80px" width="17" height="16" viewBox="0 0 17 16"><path d="M8.5 1L16 6.5l-3 8.5H4L1 6.5z" fill="none" stroke="#b0b0b0" stroke-width="1.2"/><path d="M8.5 1v7.5M16 6.5l-7.5 2M13 15L8.5 8.5M4 15l4.5-6.5M1 6.5l7.5 2M4 5l10 9M13 5L3 14" fill="none" stroke="#a9a9a9" stroke-width="1"/></svg>
<svg class="r" style="left:659px;top:86px" width="7" height="4" viewBox="0 0 7 4"><path d="M.5 .5h6L3.5 3.5z" fill="#c4c4c4"/></svg>
<svg class="r" style="left:683px;top:35px" width="33" height="33" viewBox="0 0 33 33"><rect x="2" y="9.5" width="7" height="18.5" fill="#a8a8a8"/><rect x="10" y="1.5" width="7.3" height="26.5" fill="#d0d0d0"/><rect x="18" y="7" width="7" height="8" fill="#b8b8b8"/><rect x="16.5" y="15.5" width="15" height="15" fill="#f3f3f3" stroke="#a9a9a9" stroke-width="1.2"/><path d="M19 18h2M22.5 18h7M19 21h2M19 24h2M19 27h2" stroke="#c8c8c8" stroke-width="1.3"/><path d="M28 20v5h-5.5M24 23l-2 2 2 2" fill="none" stroke="#a0a0a0" stroke-width="1.1"/></svg>
<svg class="r" style="left:696.7px;top:90px" width="7" height="4" viewBox="0 0 7 4"><path d="M.5 .5h6L3.5 3.5z" fill="#555555"/></svg>
<svg class="r" style="left:721px;top:109px" width="9" height="9" viewBox="0 0 9 9"><path d="M.5 .5h7M.5 .5v7" stroke="#b0b0b0" stroke-width="1"/><path d="M3 3l4.5 4.5M4 7.5h3.5V4" fill="none" stroke="#a0a0a0" stroke-width="1"/></svg>
<svg class="r" style="left:744px;top:35px" width="31" height="30" viewBox="0 0 31 30"><rect x="1" y="5" width="4" height="24" fill="#b5b5b5"/><rect x="6" y="3" width="4" height="26" fill="#c8c8c8"/><rect x="11" y="1" width="4" height="28" fill="#dedede"/><rect x="16" y="1" width="4" height="28" fill="#d0d0d0"/><rect x="21" y="3" width="4" height="26" fill="#c0c0c0"/><rect x="26" y="5" width="4" height="24" fill="#b0b0b0"/><circle cx="15" cy="21" r="7.2" fill="#eeeeee" stroke="#a5a5a5" stroke-width="1.3"/><path d="M8 19h14M8 23h14M15 14v14M11.7 14.8c-1.8 4-1.8 8.5 0 12.4M18.3 14.8c1.8 4 1.8 8.5 0 12.4" fill="none" stroke="#a5a5a5" stroke-width="1"/></svg>
<svg class="r" style="left:771px;top:90.5px" width="7" height="4" viewBox="0 0 7 4"><path d="M.5 .5h6L3.5 3.5z" fill="#c4c4c4"/></svg>
<svg class="r" style="left:795px;top:35px" width="33" height="29" viewBox="0 0 33 29"><path d="M4.5 1v27M1 5.5h31M1 23.5h31" stroke="#ababab" stroke-width="1.1"/><path d="M5 20l8.5-10 4.5 9.5 8-11 3.5 5.5" fill="none" stroke="#b0b0b0" stroke-width="1.3"/></svg>
<svg class="r" style="left:837px;top:35px" width="33" height="29" viewBox="0 0 33 29"><path d="M4.5 1v27M1 5.5h31M1 23.5h31" stroke="#ababab" stroke-width="1.1"/><rect x="6" y="13.2" width="4" height="9" fill="#a9a9a9"/><rect x="12" y="10.1" width="4" height="12" fill="#a9a9a9"/><rect x="18" y="15" width="4" height="7" fill="#a9a9a9"/><rect x="24" y="17" width="4" height="5" fill="#a9a9a9"/></svg>
<svg class="r" style="left:883px;top:35px" width="33" height="29" viewBox="0 0 33 29"><path d="M4.5 1v27M1 5.5h31M1 23.5h31" stroke="#ababab" stroke-width="1.1"/><rect x="6.2" y="8" width="3" height="5.5" fill="#a9a9a9"/><rect x="11.3" y="8" width="3" height="5.5" fill="#a9a9a9"/><rect x="25.3" y="8" width="3" height="5.5" fill="#a9a9a9"/><rect x="15" y="15.4" width="3" height="5.3" fill="#a9a9a9"/><rect x="20" y="15.4" width="3" height="5.3" fill="#a9a9a9"/></svg>
<svg class="r" style="left:954px;top:35px" width="31" height="31" viewBox="0 0 31 31"><rect x="1.5" y="1.5" width="27.5" height="27.5" fill="#f7f7f7" stroke="#a9a9a9" stroke-width="1.3"/><rect x="1" y="1" width="28.5" height="3.5" fill="#a9a9a9"/><rect x="4" y="7" width="22.5" height="3.7" fill="#b5b5b5"/><rect x="4" y="13.5" width="6" height="3.5" fill="#b5b5b5"/><rect x="4" y="21" width="22.5" height="4" fill="#d8d8d8"/><path d="M10.5 12h16.5l-6.8 8v7h-2.8v-7z" fill="#f7f7f7"/><path d="M11.5 12.5h15l-6 7v7.5h-2.5v-7.5z" fill="#a9a9a9"/></svg>
<svg class="r" style="left:1017px;top:39px" width="33" height="29" viewBox="0 0 33 29"><rect x="1.5" y="1.5" width="27.5" height="14.2" fill="#f7f7f7" stroke="#a9a9a9" stroke-width="1.3"/><rect x="1" y="1" width="28.5" height="3.5" fill="#a9a9a9"/><path d="M3.5 9h2M7 9h2.5M10.5 9h2.5M14 9h2M17.5 9h2M21 9h2M24.5 9h2" stroke="#bdbdbd" stroke-width="2"/><path d="M12 11.5h19l-7.3 7.5v8.5h-2.5V19z" fill="#f7f7f7"/><path d="M13 12h17l-6.6 6.8v8.7h-2V18.8z" fill="#a9a9a9"/></svg>
<svg class="r" style="left:1074px;top:35px" width="34" height="33" viewBox="0 0 34 33"><circle cx="13.4" cy="13" r="12.2" fill="none" stroke="#ababab" stroke-width="1.2"/><path d="M1.5 9h24M1.5 17h24M13.4 1v24M8.5 2c-3 6.5-3 15.5 0 22M18.3 2c3 6.5 3 15.5 0 22" fill="none" stroke="#ababab" stroke-width="1.1"/><path d="M20 21h9a3.8 3.8 0 0 1 0 7.6h-3M25 28.6h-5a3.8 3.8 0 0 1 0-7.6" fill="none" stroke="#f1f1f1" stroke-width="6"/><path d="M24 22.5h5a3 3 0 0 1 0 6h-2M25 28.5h-5a3 3 0 0 1 0-6h2" fill="none" stroke="#a6a6a6" stroke-width="2.8"/></svg>
<svg class="r" style="left:1121px;top:31px" width="32" height="32" viewBox="0 0 32 32"><rect x="1.5" y="1.5" width="29" height="29" fill="#fbfbfb" stroke="#c6c6c6" stroke-width="1"/><path d="M12 21l5.5-10.5h2L18.3 21M13.8 17.3h5" fill="none" stroke="#5677a6" stroke-width="2.1" stroke-linejoin="round"/></svg>
<svg class="r" style="left:1134px;top:89px" width="7" height="4" viewBox="0 0 7 4"><path d="M.5 .5h6L3.5 3.5z" fill="#666666"/></svg>
<div class="t" style="left:1167px;top:30.22px;font-size:21px;color:#b5b5b5;font-weight:bold;font-family:'Liberation Serif',serif;">π</div>
<svg class="r" style="left:1232px;top:41px" width="7" height="4" viewBox="0 0 7 4"><path d="M.5 .5h6L3.5 3.5z" fill="#c2c2c2"/></svg>
<div class="t" style="left:1167.5px;top:57.11px;font-size:17px;color:#b5b5b5;font-weight:bold;font-family:'Liberation Serif',serif;">Ω</div>
<svg class="r" style="left:1347px;top:108px" width="10" height="7" viewBox="0 0 10 7"><path d="M1.2 5.8l3.8-3.8 3.8 3.8" fill="none" stroke="#666" stroke-width="2"/></svg>
<svg class="r" style="left:92px;top:140px" width="9" height="6" viewBox="0 0 9 6"><path d="M.5 .5h8L4.5 5z" fill="#666"/></svg>
<div class="r" style="left:121px;top:139px;width:2px;height:2px;background:#b0b0b0;"></div>
<div class="r" style="left:121px;top:143.5px;width:2px;height:2px;background:#b0b0b0;"></div>
<div class="r" style="left:121px;top:148px;width:2px;height:2px;background:#b0b0b0;"></div>
<svg class="r" style="left:150px;top:139px" width="12" height="11" viewBox="0 0 12 11"><path d="M1 1l10 9M11 1L1 10" stroke="#666" stroke-width="1.5"/></svg>
<svg class="r" style="left:185px;top:138px" width="15" height="12" viewBox="0 0 15 12"><path d="M1.5 6.5l3.8 4L13.5 1.5" fill="none" stroke="#666" stroke-width="2.2"/></svg>
<div class="t" style="left:222px;top:137.07px;font-size:13.5px;color:#666;font-weight:bold;font-family:'Liberation Serif',serif;font-style:italic;">f</div>
<div class="t" style="left:228.5px;top:140.03px;font-size:10px;color:#666;font-weight:bold;font-family:'Liberation Serif',serif;font-style:italic;">x</div>
<svg class="r" style="left:1348px;top:140px" width="10" height="7" viewBox="0 0 10 7"><path d="M1.2 1.2l3.8 3.8 3.8-3.8" fill="none" stroke="#707070" stroke-width="2"/></svg>
<svg class="r" style="left:10px;top:170px" width="13" height="13" viewBox="0 0 13 13"><path d="M12.5 .5v12H.5z" fill="#b5b5b5"/></svg>
</body></html>
